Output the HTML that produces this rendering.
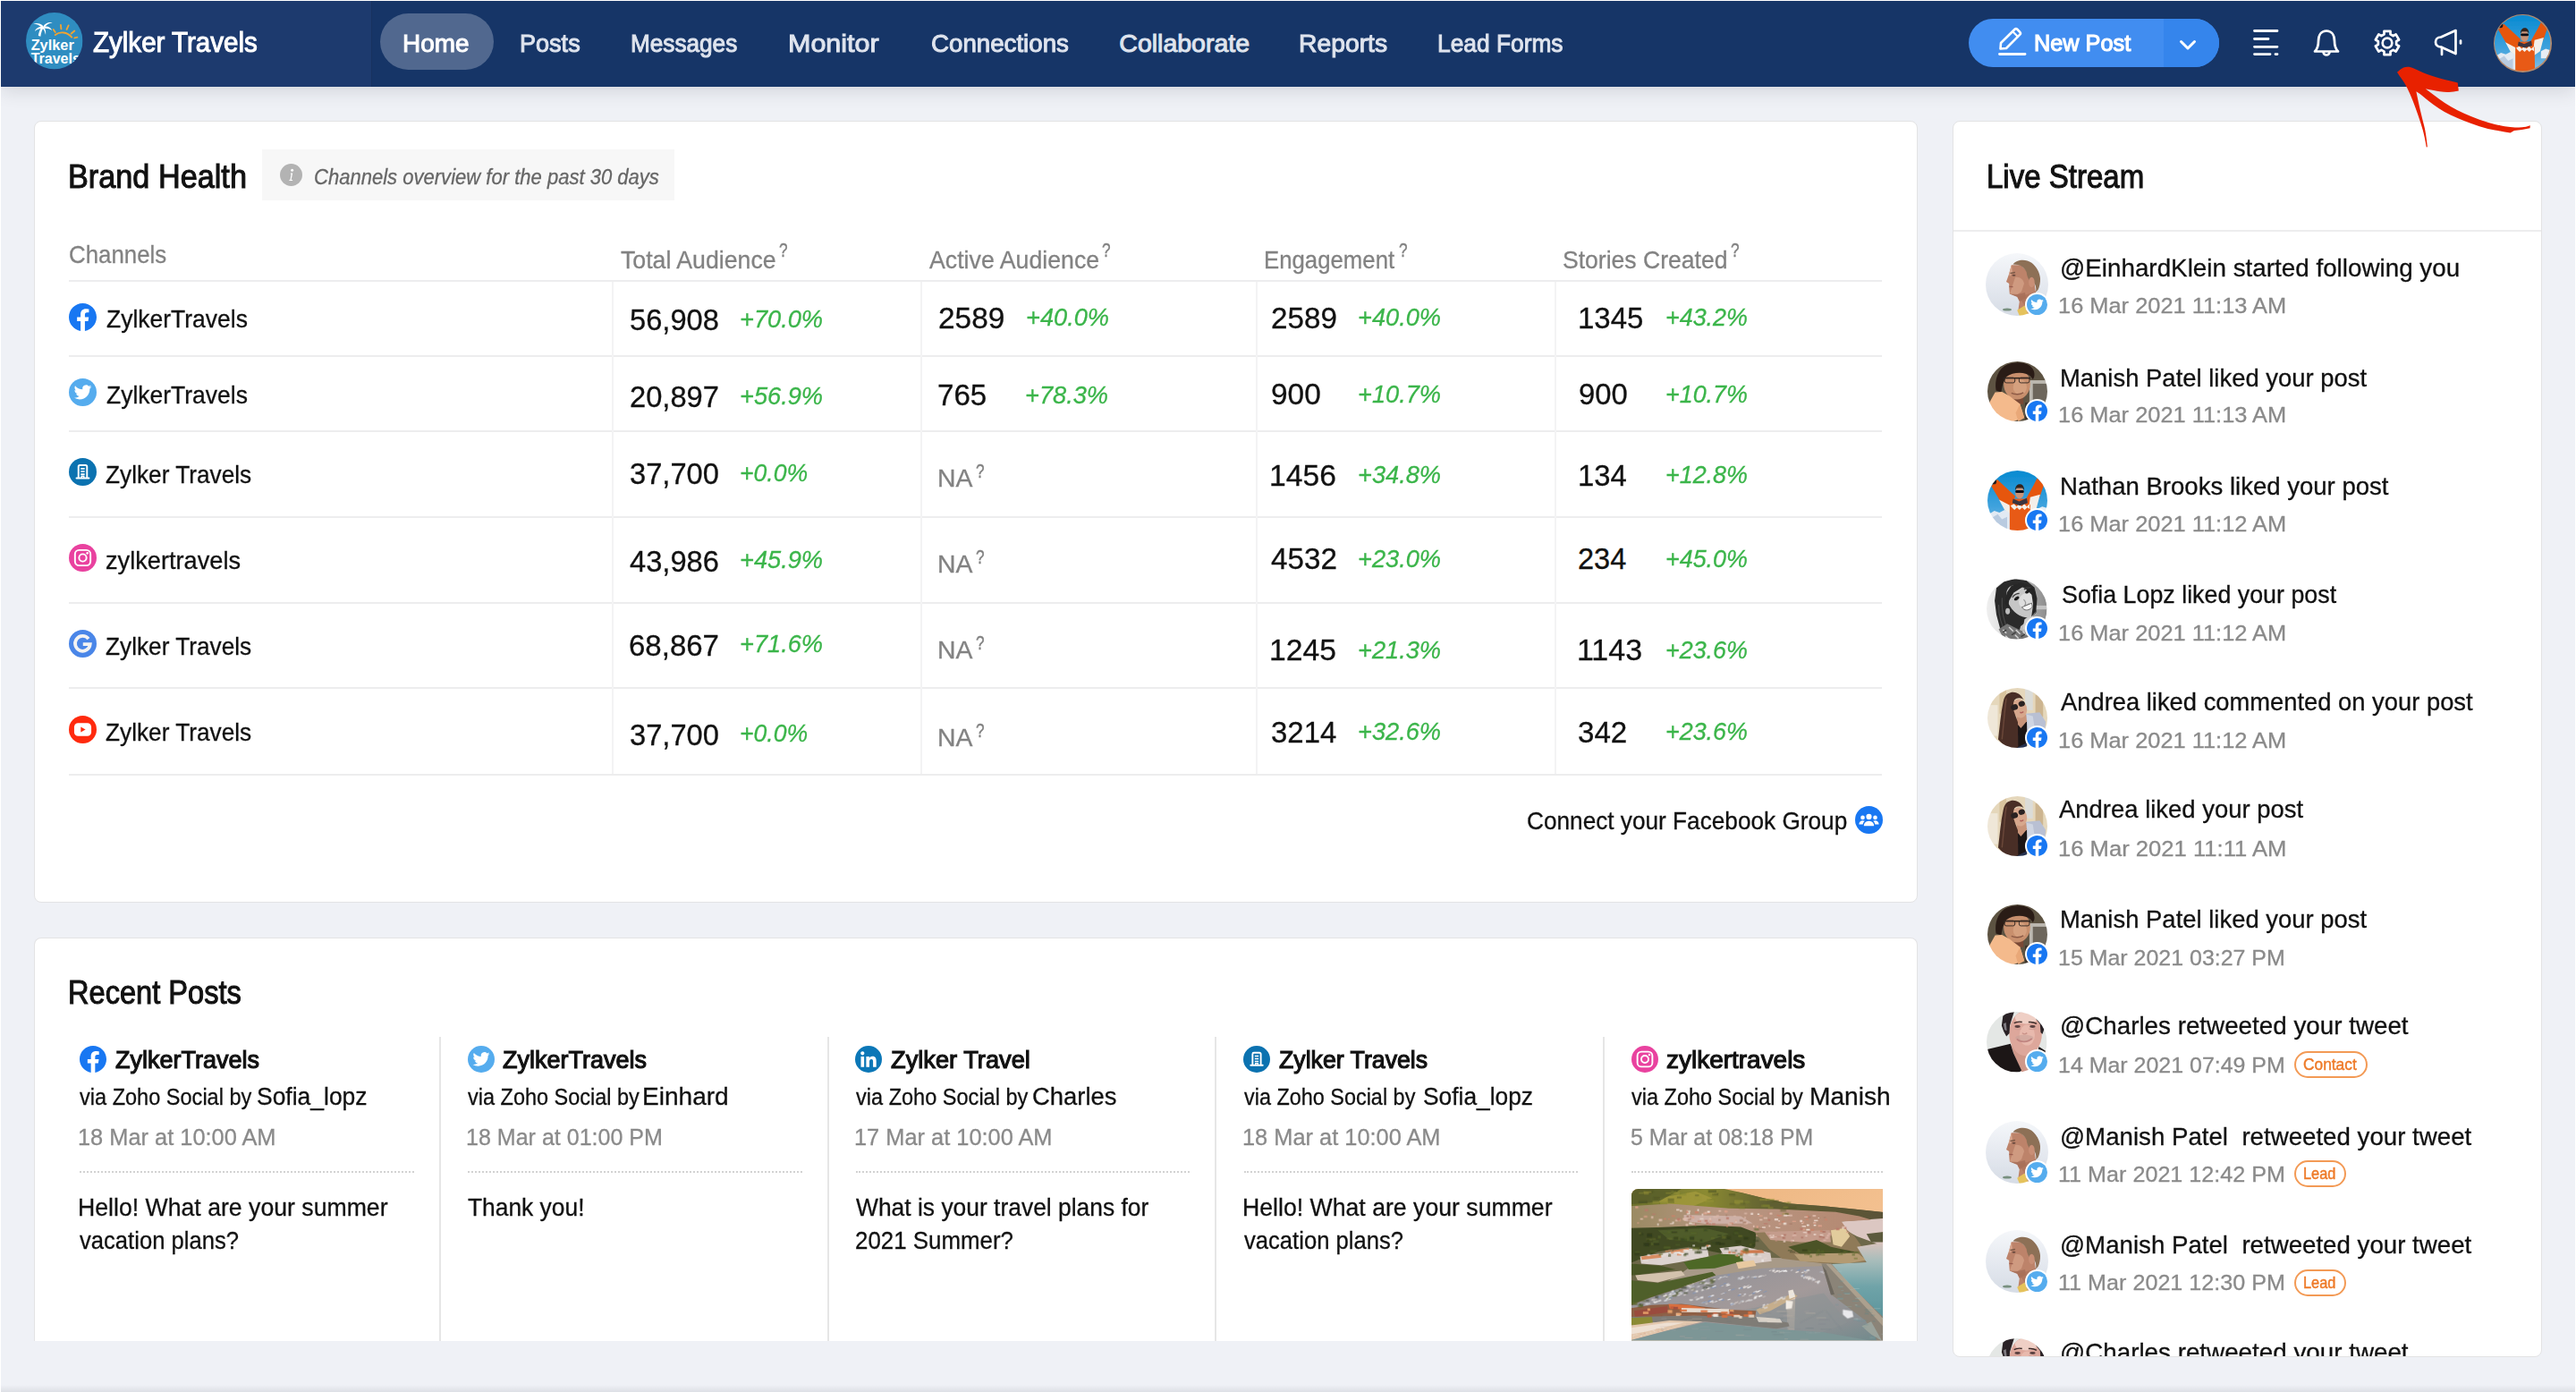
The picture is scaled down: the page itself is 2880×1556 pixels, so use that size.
<!DOCTYPE html>
<html lang="en"><head><meta charset="utf-8"><title>Zylker Travels - Zoho Social</title><style>
html,body{margin:0;padding:0}
body{width:2880px;height:1556px;overflow:hidden;background:#fff;position:relative;font-family:"Liberation Sans",sans-serif}
#app{position:absolute;left:1px;top:1px;width:2878px;height:1555px;background:#eff1f6;overflow:hidden}
#app>*, .abs, .card, header{position:absolute}
nav,article{display:block;margin:0;padding:0}
h2,h3,p,a{margin:0;font-weight:normal}
.t{position:absolute;white-space:pre;line-height:1;transform-origin:0 0;margin:0;padding:0}
.ic{position:absolute;overflow:visible}
header{left:0;top:0;width:2878px;height:96px;background:#163567;box-shadow:0 4px 20px rgba(30,35,50,.14)}
.brandbg{position:absolute;left:0;top:0;width:414px;height:96px;background:#1d3a6e;border-right:1px solid #17325f}
.pill{position:absolute;left:424.500px;top:14px;width:126.500px;height:62.500px;border-radius:32px;background:#51688f}
.np{position:absolute;left:2200px;top:20.500px;width:280px;height:54px;border-radius:27px;background:#418df0;overflow:hidden}
.np i{position:absolute;right:0;top:0;width:62px;height:54px;background:#3585ec}
.card{background:#fff;border:1px solid #e3e3e4;border-radius:8px;box-sizing:border-box}
.hl{position:absolute;height:2px;background:#ededee}
.vl{position:absolute;width:2px;background:#f3f3f4}
.dot{position:absolute;height:0;border-top:2px dotted #d2d2d2}
.tag{position:absolute;box-sizing:border-box;border:2px solid #f39a55;border-radius:15px;height:30px}
.av{position:absolute;border-radius:50%}
.bd{position:absolute;border-radius:50%;background:#fff}
</style></head><body>

<svg width="0" height="0" style="position:absolute">
<defs>
<symbol id="i-fb" viewBox="0 0 24 24"><circle cx="12" cy="12" r="11.6" fill="#fff"/><path fill="#1877f2" d="M24 12.073c0-6.627-5.373-12-12-12s-12 5.373-12 12c0 5.99 4.388 10.954 10.125 11.854v-8.385H7.078v-3.47h3.047V9.43c0-3.007 1.792-4.669 4.533-4.669 1.312 0 2.686.235 2.686.235v2.953H15.83c-1.491 0-1.956.925-1.956 1.874v2.25h3.328l-.532 3.47h-2.796v8.385C19.612 23.027 24 18.062 24 12.073z"/></symbol>
<symbol id="i-tw" viewBox="0 0 24 24"><circle cx="12" cy="12" r="12" fill="#55acee"/><path fill="#fff" transform="translate(4.4 4.3) scale(.635)" d="M23.953 4.57a10 10 0 01-2.825.775 4.958 4.958 0 002.163-2.723c-.951.555-2.005.959-3.127 1.184a4.92 4.92 0 00-8.384 4.482C7.69 8.095 4.067 6.13 1.64 3.162a4.822 4.822 0 00-.666 2.475c0 1.71.87 3.213 2.188 4.096a4.904 4.904 0 01-2.228-.616v.06a4.923 4.923 0 003.946 4.827 4.996 4.996 0 01-2.212.085 4.936 4.936 0 004.604 3.417 9.867 9.867 0 01-6.102 2.105c-.39 0-.779-.023-1.17-.067a13.995 13.995 0 007.557 2.209c9.053 0 13.998-7.496 13.998-13.985 0-.21 0-.42-.015-.63A9.935 9.935 0 0024 4.59z"/></symbol>
<symbol id="i-in" viewBox="0 0 24 24"><circle cx="12" cy="12" r="12" fill="#0b77b7"/><path fill="#fff" transform="translate(2.3 2.3) scale(.815)" d="M20.447 20.452h-3.554v-5.569c0-1.328-.027-3.037-1.852-3.037-1.853 0-2.136 1.445-2.136 2.939v5.667H9.351V9h3.414v1.561h.046c.477-.9 1.637-1.85 3.37-1.85 3.601 0 4.267 2.37 4.267 5.455v6.286zM5.337 7.433c-1.144 0-2.063-.926-2.063-2.065 0-1.138.92-2.063 2.063-2.063 1.14 0 2.064.925 2.064 2.063 0 1.139-.925 2.065-2.064 2.065zm1.782 13.019H3.555V9h3.564v11.452z"/></symbol>
<symbol id="i-co" viewBox="0 0 24 24"><circle cx="12" cy="12" r="12" fill="#0b72b0"/><g fill="none" stroke="#fff" stroke-width="1.5"><path d="M8.3 17.3V7.4a1.2 1.2 0 0 1 1.2-1.2h5a1.2 1.2 0 0 1 1.2 1.2v9.9"/><path d="M6.6 17.4h10.8" stroke-linecap="round"/><path d="M10.3 9.2h3.4M10.3 11.6h3.4M10.3 14h3.4" stroke-width="1.3"/><path d="M11 17.3v-1.6h2v1.6" stroke-width="1.1"/></g></symbol>
<symbol id="i-ig" viewBox="0 0 24 24"><circle cx="12" cy="12" r="12" fill="#e9429f"/><g fill="none" stroke="#fff" stroke-width="1.5"><rect x="5.300" y="5.300" width="13.400" height="13.400" rx="3.600"/><circle cx="12" cy="12" r="3.200"/></g><circle cx="16" cy="8" r="1" fill="#fff"/></symbol>
<symbol id="i-gg" viewBox="0 0 24 24"><circle cx="12" cy="12" r="12" fill="#4a86e8"/><path fill="none" stroke="#f3f3f3" stroke-width="2.900" d="M17 7.800A6.500 6.500 0 1 0 18.400 12.500H12.200"/></symbol>
<symbol id="i-yt" viewBox="0 0 24 24"><circle cx="12" cy="12" r="12" fill="#ff2a0e"/><rect x="4.6" y="6.3" width="14.8" height="11.4" rx="3.4" fill="#fff"/><path d="M10.3 9.6v4.8l4.1-2.4z" fill="#ff2a0e"/></symbol>
<symbol id="i-grp" viewBox="0 0 24 24"><circle cx="12" cy="12" r="12" fill="#1877f2"/><g fill="#fff"><circle cx="12" cy="9.2" r="2.4"/><path d="M7.6 17.2c0-2.6 1.9-4.3 4.4-4.3s4.4 1.7 4.4 4.3z"/><circle cx="6.6" cy="10" r="1.8"/><path d="M3.4 15.8c0-2 1.3-3.3 3.2-3.3.7 0 1.3.2 1.8.5-1 .8-1.6 2-1.7 2.8z"/><circle cx="17.4" cy="10" r="1.8"/><path d="M20.6 15.8c0-2-1.3-3.3-3.2-3.3-.7 0-1.3.2-1.8.5 1 .8 1.6 2 1.7 2.8z"/></g></symbol>

<clipPath id="cc"><circle cx="35" cy="35" r="35"/></clipPath>
<filter id="ab" x="-10%" y="-10%" width="120%" height="120%"><feGaussianBlur stdDeviation=".55"/></filter>
<linearGradient id="g-ein" x1="0" y1="0" x2="0" y2="1"><stop offset="0" stop-color="#f5f7fa"/><stop offset=".55" stop-color="#e4e8ef"/><stop offset="1" stop-color="#d6dce5"/></linearGradient>
<symbol id="a-ein" viewBox="0 0 70 70"><g clip-path="url(#cc)"><g filter="url(#ab)">
<rect width="70" height="70" fill="url(#g-ein)"/>
<ellipse cx="24" cy="63" rx="5" ry="1.6" fill="#78907f"/>
<path d="M28.800 13.300 26.200 23 23 32 26.200 34 26.200 38.500 26.800 45.600 35.200 48.800 37.800 54 36.500 63 39 70H55L56 43.600 54.600 34 47 21 39 13.300z" fill="#bd836a"/>
<path d="M28.800 13.300 30 22 27 26 26.200 23z" fill="#d8a58c"/>
<path d="M33 27c5-1 9 2 10 7l-3 9-6 4-7-1.500z" fill="#cf9a80"/>
<path d="M30.500 12.500C34 7.500 44 5.500 51.400 10.700 57 15 60.500 22 61 28c.3 5-1 10-2.500 13L56 43.500C57 39 55.500 35 54 33l-4-1c-2.500-3-4-7-4.400-11-2-4-5-7-9.600-8z" fill="#8d6f57"/>
<ellipse cx="51.400" cy="32.500" rx="3.300" ry="5.800" fill="#c98f76"/>
<path d="M35.200 63.700 43.600 58.500 48 70H37.800z" fill="#e5c25b"/>
<path d="M27.500 22.500l5.500-1" stroke="#7d5a48" stroke-width="1.300"/><ellipse cx="31.500" cy="24.800" rx="2" ry="1" fill="#6b4a3d"/><path d="M26.500 37.400l4 .3" stroke="#9a5d50" stroke-width="1.200"/><path d="M27 45.500 35.500 49 38 54 45 50 44 44 36 46z" fill="#a36b55" opacity=".7"/>
<path d="M36.500 49 45 60 56 52 56 43z" fill="#a96f58" opacity=".6"/>
</g></g></symbol>

<symbol id="a-man" viewBox="0 0 70 70"><g clip-path="url(#cc)"><g filter="url(#ab)">
<rect width="70" height="70" fill="#5d5242"/>
<rect x="49" y="22" width="21" height="30" fill="#bcb8b0"/>
<rect x="53" y="26" width="17" height="22" fill="#6d665c"/>
<rect x="44" y="48" width="26" height="22" fill="#3c3229"/>
<path d="M25 38h17v12H25z" fill="#7a4a35"/>
<ellipse cx="34.500" cy="26.500" rx="15.500" ry="18" fill="#c88f6d"/>
<ellipse cx="38" cy="30" rx="8" ry="9" fill="#d5a07e"/>
<path d="M10 34C8 22 12 8 24 3.500 34-.5 48 1 53 9c3 5 2 10 0 12l-3-4C44 12 30 12 22 18l-4 8-2 10z" fill="#2a1c17"/>
<path d="M17 19.500h33" stroke="#2b211d" stroke-width="1.600"/>
<rect x="20" y="19" width="12" height="6" rx="2" fill="none" stroke="#3a2c26" stroke-width="1"/>
<rect x="37" y="19" width="12" height="6" rx="2" fill="none" stroke="#3a2c26" stroke-width="1"/>
<path d="M28 37c4 2 10 2 14-.5" stroke="#8d5a45" stroke-width="1.500" fill="none"/>
<path d="M0 52 9 36l8-.5 9 5 12 9 5 16-14 5H0z" fill="#f4ba8c"/>
<path d="M38 50 43 66 36 70 33 60z" fill="#e9a878"/>
</g></g></symbol>

<linearGradient id="g-sky" x1="0" y1="0" x2="0" y2="1"><stop offset="0" stop-color="#078ad1"/><stop offset=".6" stop-color="#3fa2dd"/><stop offset="1" stop-color="#86c0e6"/></linearGradient>
<symbol id="a-nat" viewBox="0 0 70 70"><g clip-path="url(#cc)"><g filter="url(#ab)">
<rect width="70" height="70" fill="url(#g-sky)"/>
<path d="M0 52 8 47l6 2 6-3 8 3V70H0z" fill="#e2eaf3"/>
<path d="M4 56l8-5 5 6 6-3v16H2z" fill="#b9cbe0"/>
<path d="M58 45l6-3 6 2v10H58z" fill="#e8eef5"/>
<path d="M4.500 18 11.500 10.500 32.500 30 27.500 43 14.500 35z" fill="#e6560f"/>
<path d="M58 9 66 16.500 61 31 49 45 45 33 54.500 16z" fill="#e6560f"/>
<path d="M13.500 34 27 41 30 52 20 46z" fill="#f3efe9"/>
<path d="M50 31 61.500 28 57 45 47 52z" fill="#f3efe9"/>
<path d="M26 41 30 33h17l3 8 .5 29H26z" fill="#e85a12"/>
<path d="M27 41l4-2 3 3 3-3 3 3 3-3 3 3 3-3 .5 6-3-2-3 3-3-3-3 3-3-3-3 3-3-3z" fill="#f5f1ec"/>
<path d="M30 33 37 36 46 32 47 38 38 41 29 38z" fill="#3b3440"/>
<ellipse cx="37.500" cy="26" rx="5" ry="7" fill="#c99377"/>
<path d="M32.300 23c0-5 3-7 5.500-7s5.200 2 5.200 7l-2-2.500h-7z" fill="#33231b"/>
<rect x="32.600" y="23" width="10" height="3" rx="1.300" fill="#0f0f12"/>
<circle cx="7.500" cy="13" r="3" fill="#1d1b20"/>
</g></g></symbol>

<linearGradient id="g-sof" x1="0" y1="0" x2="1" y2="0"><stop offset="0" stop-color="#efefef"/><stop offset=".35" stop-color="#dcdcdc"/><stop offset=".8" stop-color="#a2a2a2"/><stop offset="1" stop-color="#8c8c8c"/></linearGradient>
<symbol id="a-sof" viewBox="0 0 70 70"><g clip-path="url(#cc)"><g filter="url(#ab)">
<rect width="70" height="70" fill="url(#g-sof)"/>
<rect x="56" y="31" width="14" height="4.500" fill="#c4c4c4"/>
<path d="M11.400 10.700 20.100 3.400 32.200 .3 46.200 2 55.600 10 58.600 22.800 57.600 38.900 51.600 45.600 39.500 55 35.500 70H24L16.800 61.700 11.400 41.600 9.400 25.500z" fill="#2b2b2b"/>
<path d="M14 30c0 12 3 24 9 34M18 22c-1 14 2 28 8 40" stroke="#4a4a4a" stroke-width="1.100" fill="none"/>
<path d="M44 47 53 41 57 52 50 62 42 58z" fill="#cfcfcf"/>
<ellipse cx="40.200" cy="26.100" rx="21.500" ry="14" transform="rotate(51 40.200 26.100)" fill="#c6c6c6"/>
<ellipse cx="46.200" cy="25.500" rx="8.500" ry="9.500" transform="rotate(40 46.200 25.500)" fill="#dedede"/>
<ellipse cx="34" cy="12.500" rx="7" ry="4" transform="rotate(-30 34 12.500)" fill="#d4d4d4"/>
<path d="M23.500 16.100 28.800 8 39.500 4.700 48.900 7.400 40.900 10 31.500 16.100 26.100 25.500 24.800 34.900 21 28z" fill="#262626"/>
<path d="M49 7.400 56 14 58 26 57 38 52 44 54 30 52 16z" fill="#262626"/>
<ellipse cx="34.900" cy="22.800" rx="3.300" ry="1.800" transform="rotate(-32 34.900 22.800)" fill="#1f1f1f"/>
<ellipse cx="47.600" cy="14.700" rx="3.300" ry="1.800" transform="rotate(-32 47.600 14.700)" fill="#1f1f1f"/>
<path d="M30 21.500c2-3 5-4.500 8-4.500M43.500 12.500c2.500-2.300 5.500-3 8-2.200" stroke="#3a3a3a" stroke-width="1.300" fill="none"/>
<path d="M43 24c2 2 3 4.500 1.500 6.500 2 .5 4-.5 5-2" stroke="#9a9a9a" stroke-width="1.300" fill="none"/>
<path d="M40.800 33 52.300 28.200 53.200 32.200C51 35.800 46.500 37.200 43.500 35.500z" fill="#f6f6f6" stroke="#5a5a5a" stroke-width=".9"/>
<ellipse cx="24.500" cy="37.500" rx="2.600" ry="3.600" fill="#bdbdbd"/>
<path d="M14.100 58.300 24 52 36 58 48.900 64 50 70H20z" fill="#757575"/>
<path d="M19 59l4 4m3-7 5 5m3-2 5 5m3-3 4 4M22 66l3 3m8-4 4 4" stroke="#d6d6d6" stroke-width="1.500"/>
<path d="M19 62l4-3m6 6 5-3m6 5 5-3" stroke="#3a3a3a" stroke-width="1.300"/>
</g></g></symbol>

<symbol id="a-and" viewBox="0 0 70 70"><g clip-path="url(#cc)"><g filter="url(#ab)">
<rect width="70" height="70" fill="#e5d7bb"/>
<rect x="0" y="20" width="12" height="36" fill="#f1ebe0" opacity=".8"/>
<rect x="14" y="0" width="8" height="30" fill="#d3bb90" opacity=".7"/>
<rect x="44" y="0" width="9" height="26" fill="#d8dde0" opacity=".8"/>
<rect x="56" y="8" width="9" height="26" fill="#c7ad86" opacity=".8"/>
<path d="M45 30l16-1.500 7 11-1 12-21 3z" fill="#b9c0d3"/>
<path d="M46 31l7 2 3 20-10 2z" fill="#cfd5e2"/>
<path d="M34 41 46 38l.6 28L34 70z" fill="#1b1518"/>
<path d="M34 33l11-2 1 8-7 8-5-6z" fill="#c99479"/>
<ellipse cx="37.500" cy="24" rx="8.500" ry="11" transform="rotate(-15 37.500 24)" fill="#d7a78c"/>
<path d="M24 6.500C30 3 38 5 42.500 14c-3-3-8-3-11 0-2 4-2 10 0 15l4 11 .5 30H22L12.500 60c2-16 3-30 6-44 1-5 3-8 5.500-9.500z" fill="#4a2f25"/>
<path d="M22 12c-2 14-3 30-5 48" stroke="#6a473a" stroke-width="1.500" fill="none"/>
<ellipse cx="31.500" cy="22.500" rx="4.200" ry="3.400" transform="rotate(-20 31.500 22.500)" fill="#2a2320"/>
<ellipse cx="40" cy="18.500" rx="3.800" ry="3.200" transform="rotate(-20 40 18.500)" fill="#2a2320"/>
<path d="M38 28.500c1.500.8 3 .2 4-.8" stroke="#b0605a" stroke-width="1.600" fill="none"/>
<path d="M46 64l-12 6h12z" fill="#28324f"/>
</g></g></symbol>

<symbol id="a-cha" viewBox="0 0 70 70"><g clip-path="url(#cc)"><g filter="url(#ab)">
<rect width="70" height="70" fill="#e4e7e5"/>
<path d="M60.700 40.500 68 45.200 70 46V50L60 43.200z" fill="#1d1719"/>
<path d="M28.500 38.500 55.300 47.900 48.600 70H40.500L31.200 47.900z" fill="#cf988a"/>
<ellipse cx="45.200" cy="25.100" rx="19" ry="26" fill="#dda79b"/>
<ellipse cx="46" cy="7" rx="13" ry="7" fill="#efcfc5"/>
<ellipse cx="47" cy="27" rx="9" ry="12" fill="#e8b9ad"/>
<path d="M17.500 16 19 5 24.500 .5 32 0 29.500 7.700 27 15.800 26.500 25 23 28.500 19.800 22.500z" fill="#2a2426"/>
<path d="M19.500 14 22.500 12.500 23.500 22 21 21z" fill="#807b82"/>
<path d="M58 5 64 13 67 19.800 64.700 25.800 62.700 23.800 62 14.400 57.300 8.400z" fill="#2a2426"/>
<path d="M31.800 13.200C35 11.400 38 11.200 41.200 11.900M48.600 12C52 11.600 55.500 12.300 58 13.900" stroke="#3a2a28" stroke-width="1.500" fill="none"/>
<ellipse cx="35.900" cy="17.100" rx="3.200" ry="1.500" fill="#5a4140"/>
<ellipse cx="53.300" cy="17.100" rx="3.200" ry="1.500" fill="#5a4140"/>
<path d="M31.500 19.500c3 1.300 6 1.300 8.500.2M49 19.700c3 1.100 6 1.100 8.500-.2" stroke="#d29f97" stroke-width="1.200" fill="none"/>
<path d="M41.500 24.500c1.500 1.800 3.500 1.800 5.500 0" stroke="#c99288" stroke-width="1.400" fill="none"/>
<ellipse cx="43.900" cy="30.300" rx="10.500" ry="3.600" fill="#c3a098" opacity=".55"/>
<path d="M35.200 31.500C39 35.600 48 35.800 52.600 31" stroke="#c08480" stroke-width="1.900" fill="none"/>
<path d="M0 44 1.700 43.200 27.800 37.200 31.200 47.900 40.500 68 38 70H0z" fill="#1d1719"/>
</g></g></symbol>
</defs></svg>

<div id="app">
<div id="w" style="left:-1px;top:-1px;width:2880px;height:1556px">
<header style="left:1px;top:1px">
<div class="brandbg"></div>
</header>
<svg class="ic" style="left:28.500px;top:14.300px;width:63.500px;height:63.500px" viewBox="0 0 62 62">
<defs><clipPath id="lc"><circle cx="31" cy="31" r="31"/></clipPath></defs>
<g clip-path="url(#lc)"><rect width="62" height="62" fill="#2f8dc1"/>
<g fill="none" stroke="#f2a330" stroke-width="1.800" stroke-linecap="round"><path d="M32 24.500c5-4 13-3.500 18 2.500"/><path d="M30 18.500l2 3M38 13.500l.5 4.500M46.500 14l-2 4.500M53 20l-3.500 3M56 27l-3 .8"/></g>
<g fill="#fff"><path d="M13.500 25.500c1-6 3-9 5-10.500l1.500.5c-2 2.500-3.500 6-4 10.500z"/><path d="M19 15c-3-3-7-4-11-2.500 4 0 7 1.500 9.500 4z"/><path d="M19 15c2-3.500 6-5 10-4-4 .5-6.500 2.500-8.500 5z"/><path d="M19.500 15.500c4-1 7.500.5 9 4-3-2-5.500-2.500-8.500-2z"/><path d="M18.500 15.500c-4-.5-7.500 1.500-9 5 3-2.500 5.500-3 8.500-3z"/><path d="M19.500 16c2 2 2.500 5 2 8.500-.8-3.500-1.500-5.500-3.500-7.500z"/></g>
<text x="5.500" y="41" font-family="Liberation Sans, sans-serif" font-weight="bold" font-size="17" fill="#fff" textLength="47" lengthAdjust="spacingAndGlyphs">Zylker</text>
<text x="5.500" y="56" font-family="Liberation Sans, sans-serif" font-weight="bold" font-size="17" fill="#fff" textLength="54" lengthAdjust="spacingAndGlyphs">Travels</text>
</g></svg>
<div class="t" style="left:104.0px;top:32.0px;font-size:30.5px;color:#fff;-webkit-text-stroke:1px #fff;transform:scaleX(0.9683);">Zylker Travels</div>
<div class="pill" style="left:425px;top:14.500px;width:127px;height:63px"></div>
<nav>
<a class="t" style="left:449.5px;top:33.5px;font-size:28.5px;color:#fff;-webkit-text-stroke:1px #fff;transform:scaleX(0.9797);">Home</a>
<a class="t" style="left:581.1px;top:33.5px;font-size:28.5px;color:#dfe4ee;-webkit-text-stroke:1px #dfe4ee;transform:scaleX(0.9493);">Posts</a>
<a class="t" style="left:705.2px;top:33.5px;font-size:28.5px;color:#dfe4ee;-webkit-text-stroke:1px #dfe4ee;transform:scaleX(0.9180);">Messages</a>
<a class="t" style="left:881.4px;top:33.5px;font-size:28.5px;color:#dfe4ee;-webkit-text-stroke:1px #dfe4ee;transform:scaleX(1.0699);">Monitor</a>
<a class="t" style="left:1040.5px;top:33.5px;font-size:28.5px;color:#dfe4ee;-webkit-text-stroke:1px #dfe4ee;transform:scaleX(0.9713);">Connections</a>
<a class="t" style="left:1251.3px;top:33.5px;font-size:28.5px;color:#dfe4ee;-webkit-text-stroke:1px #dfe4ee;">Collaborate</a>
<a class="t" style="left:1452.2px;top:33.5px;font-size:28.5px;color:#dfe4ee;-webkit-text-stroke:1px #dfe4ee;transform:scaleX(0.9928);">Reports</a>
<a class="t" style="left:1606.9px;top:33.5px;font-size:28.5px;color:#dfe4ee;-webkit-text-stroke:1px #dfe4ee;transform:scaleX(0.9240);">Lead Forms</a>
</nav>
<div class="np" style="left:2201px;top:21.300px;width:280px;height:53.700px"><i></i></div>
<svg class="ic" style="left:2232px;top:29px;width:36px;height:36px" viewBox="0 0 36 36" fill="none" stroke="#fff" stroke-width="2.600" stroke-linejoin="round" stroke-linecap="round">
<path d="M4.500 25.500 5 19 20.500 3.800a2 2 0 0 1 2.800 0l3 3a2 2 0 0 1 0 2.800L11 25z"/><path d="M18.500 6.500l5.500 5.500" stroke-width="2.200"/><path d="M3.500 31.500h28.500" stroke-width="2.800"/></svg>
<div class="t" style="left:2273.5px;top:36.3px;font-size:25.5px;color:#fff;-webkit-text-stroke:1.15px #fff;transform:scaleX(0.9917);">New Post</div>
<svg class="ic" style="left:2434px;top:42px;width:24px;height:16px" viewBox="0 0 24 16" fill="none" stroke="#fff" stroke-width="3" stroke-linecap="round" stroke-linejoin="round"><path d="M4.500 4.500 12 12 19.500 4.500"/></svg>
<svg class="ic" style="left:2516px;top:30px;width:34px;height:34px" viewBox="0 0 34 34" fill="none" stroke="#fff" stroke-width="2.800" stroke-linecap="round"><path d="M4.500 4.500h25.500M4.500 13.500h15.500M4.500 22.300h25.500M4.500 30.600h17.500M28 30.600h2"/></svg>
<svg class="ic" style="left:2583px;top:30px;width:36px;height:36px" viewBox="0 0 36 36" fill="none" stroke="#fff" stroke-width="2.700" stroke-linejoin="round" stroke-linecap="round"><path d="M5 27.500c3-3 4-6 4-11.500C9 9 12.500 4.500 18 4.500S27 9 27 16c0 5.500 1 8.500 4 11.500z"/><path d="M14.500 28.500c.5 2 2 3 3.500 3s3-1 3.500-3"/></svg>
<svg class="ic" style="left:2650px;top:29px;width:38px;height:38px" viewBox="0 0 38 38" fill="none" stroke="#fff" stroke-width="2.700" stroke-linejoin="round"><path d="M15.48 5.86 L22.52 5.86 L22.49 9.31 L25.65 11.13 L28.62 9.38 L32.14 15.48 L29.14 17.18 L29.14 20.82 L32.14 22.52 L28.62 28.62 L25.65 26.87 L22.49 28.69 L22.52 32.14 L15.48 32.14 L15.51 28.69 L12.35 26.87 L9.38 28.62 L5.86 22.52 L8.86 20.82 L8.86 17.18 L5.86 15.48 L9.38 9.38 L12.35 11.13 L15.51 9.31Z"/><circle cx="19" cy="19" r="5.300"/></svg>
<svg class="ic" style="left:2718px;top:29px;width:38px;height:38px" viewBox="0 0 38 38" fill="none" stroke="#fff" stroke-width="2.700" stroke-linejoin="round" stroke-linecap="round"><path d="M27.500 5 11 12.500C7 12.500 5 15 5 18s2 5.500 6 5.500L27.500 31z"/><path d="M12 24v8" /><path d="M33 16.500v3"/></svg>
<div class="abs" style="left:2788px;top:16px;width:64.500px;height:64.500px;border-radius:50%;background:#b58a6c"></div>
<svg class="ic" style="left:2789px;top:17px;width:62.500px;height:62.500px"><use href="#a-nat"/></svg>
<section class="card" style="left:38px;top:135px;width:2106px;height:874px"></section>
<h2 class="t" style="left:76.1px;top:180.3px;font-size:36px;color:#111;-webkit-text-stroke:1.05px #111;transform:scaleX(0.9515);">Brand Health</h2>
<div class="abs" style="left:293px;top:167px;width:461px;height:57px;background:#f7f7f7"></div>
<svg class="ic" style="left:312.500px;top:182.500px;width:25px;height:25px" viewBox="0 0 25 25"><circle cx="12.500" cy="12.500" r="12.500" fill="#b3b3b3"/><path d="M12 10.500h2.200l-1.600 7.500h1.600l-.2 1h-3.700l.2-1h.9l1.200-6.500h-.9z" fill="#fff"/><circle cx="13.600" cy="7.200" r="1.500" fill="#fff"/></svg>
<div class="t" style="left:350.6px;top:187.0px;font-size:23.5px;color:#666;font-style:italic;-webkit-text-stroke:0.3px #666;transform:scaleX(0.9378);">Channels overview for the past 30 days</div>
<div class="t" style="left:77.1px;top:271.0px;font-size:28px;color:#828282;-webkit-text-stroke:0.3px #828282;transform:scaleX(0.9231);">Channels</div>
<div class="t" style="left:694.0px;top:276.5px;font-size:28px;color:#828282;-webkit-text-stroke:0.3px #828282;transform:scaleX(0.9530);">Total Audience</div>
<div class="t" style="left:871.2px;top:270.0px;font-size:21.5px;color:#828282;-webkit-text-stroke:0.4px #828282;transform:scaleX(0.8000);">?</div>
<div class="t" style="left:1039.0px;top:276.5px;font-size:28px;color:#828282;-webkit-text-stroke:0.3px #828282;transform:scaleX(0.9545);">Active Audience</div>
<div class="t" style="left:1232.2px;top:270.0px;font-size:21.5px;color:#828282;-webkit-text-stroke:0.4px #828282;transform:scaleX(0.8000);">?</div>
<div class="t" style="left:1412.7px;top:276.5px;font-size:28px;color:#828282;-webkit-text-stroke:0.3px #828282;transform:scaleX(0.9204);">Engagement</div>
<div class="t" style="left:1564.2px;top:270.0px;font-size:21.5px;color:#828282;-webkit-text-stroke:0.4px #828282;transform:scaleX(0.8000);">?</div>
<div class="t" style="left:1747.1px;top:276.5px;font-size:28px;color:#828282;-webkit-text-stroke:0.3px #828282;transform:scaleX(0.9479);">Stories Created</div>
<div class="t" style="left:1935.2px;top:270.0px;font-size:21.5px;color:#828282;-webkit-text-stroke:0.4px #828282;transform:scaleX(0.8000);">?</div>
<div class="hl" style="left:77px;top:313.0px;width:2027px"></div>
<div class="hl" style="left:77px;top:397.0px;width:2027px"></div>
<div class="hl" style="left:77px;top:481.0px;width:2027px"></div>
<div class="hl" style="left:77px;top:577.0px;width:2027px"></div>
<div class="hl" style="left:77px;top:673.0px;width:2027px"></div>
<div class="hl" style="left:77px;top:768.0px;width:2027px"></div>
<div class="hl" style="left:77px;top:865.0px;width:2027px"></div>
<div class="vl" style="left:684.0px;top:315px;width:2px;height:550px"></div>
<div class="vl" style="left:1029.0px;top:315px;width:2px;height:550px"></div>
<div class="vl" style="left:1404.0px;top:315px;width:2px;height:550px"></div>
<div class="vl" style="left:1738.0px;top:315px;width:2px;height:550px"></div>
<svg class="ic" style="left:76.9px;top:338.5px;width:31.0px;height:31.0px"><use href="#i-fb"/></svg>
<div class="t" style="left:118.6px;top:343.0px;font-size:28px;color:#111;-webkit-text-stroke:0.3px #111;transform:scaleX(0.9455);">ZylkerTravels</div>
<div class="t" style="left:704.0px;top:341.5px;font-size:32.5px;color:#111;-webkit-text-stroke:0.3px #111;transform:scaleX(1.0052);">56,908</div>
<div class="t" style="left:827.0px;top:342.5px;font-size:27.5px;color:#3bb54a;font-style:italic;-webkit-text-stroke:0.3px #3bb54a;transform:scaleX(0.9890);">+70.0%</div>
<div class="t" style="left:1049.0px;top:340.0px;font-size:32.5px;color:#111;-webkit-text-stroke:0.3px #111;transform:scaleX(1.0286);">2589</div>
<div class="t" style="left:1147.0px;top:340.5px;font-size:27.5px;color:#3bb54a;font-style:italic;-webkit-text-stroke:0.3px #3bb54a;transform:scaleX(0.9890);">+40.0%</div>
<div class="t" style="left:1420.5px;top:340.0px;font-size:32.5px;color:#111;-webkit-text-stroke:0.3px #111;transform:scaleX(1.0214);">2589</div>
<div class="t" style="left:1518.0px;top:340.5px;font-size:27.5px;color:#3bb54a;font-style:italic;-webkit-text-stroke:0.3px #3bb54a;transform:scaleX(0.9890);">+40.0%</div>
<div class="t" style="left:1763.5px;top:340.0px;font-size:32.5px;color:#111;-webkit-text-stroke:0.3px #111;transform:scaleX(1.0145);">1345</div>
<div class="t" style="left:1861.5px;top:340.5px;font-size:27.5px;color:#3bb54a;font-style:italic;-webkit-text-stroke:0.3px #3bb54a;transform:scaleX(0.9780);">+43.2%</div>
<svg class="ic" style="left:76.9px;top:422.5px;width:31.0px;height:31.0px"><use href="#i-tw"/></svg>
<div class="t" style="left:118.6px;top:427.5px;font-size:28px;color:#111;-webkit-text-stroke:0.3px #111;transform:scaleX(0.9455);">ZylkerTravels</div>
<div class="t" style="left:704.0px;top:428.0px;font-size:32.5px;color:#111;-webkit-text-stroke:0.3px #111;transform:scaleX(1.0052);">20,897</div>
<div class="t" style="left:827.0px;top:428.5px;font-size:27.5px;color:#3bb54a;font-style:italic;-webkit-text-stroke:0.3px #3bb54a;transform:scaleX(0.9890);">+56.9%</div>
<div class="t" style="left:1048.0px;top:426.0px;font-size:32.5px;color:#111;-webkit-text-stroke:0.3px #111;transform:scaleX(1.0192);">765</div>
<div class="t" style="left:1146.0px;top:427.5px;font-size:27.5px;color:#3bb54a;font-style:italic;-webkit-text-stroke:0.3px #3bb54a;transform:scaleX(0.9890);">+78.3%</div>
<div class="t" style="left:1420.5px;top:425.0px;font-size:32.5px;color:#111;-webkit-text-stroke:0.3px #111;transform:scaleX(1.0288);">900</div>
<div class="t" style="left:1518.0px;top:426.5px;font-size:27.5px;color:#3bb54a;font-style:italic;-webkit-text-stroke:0.3px #3bb54a;transform:scaleX(0.9890);">+10.7%</div>
<div class="t" style="left:1764.5px;top:425.0px;font-size:32.5px;color:#111;-webkit-text-stroke:0.3px #111;transform:scaleX(1.0096);">900</div>
<div class="t" style="left:1861.5px;top:426.5px;font-size:27.5px;color:#3bb54a;font-style:italic;-webkit-text-stroke:0.3px #3bb54a;transform:scaleX(0.9780);">+10.7%</div>
<svg class="ic" style="left:76.9px;top:511.5px;width:31.0px;height:31.0px"><use href="#i-co"/></svg>
<div class="t" style="left:118.1px;top:516.5px;font-size:28px;color:#111;-webkit-text-stroke:0.3px #111;transform:scaleX(0.9364);">Zylker Travels</div>
<div class="t" style="left:704.0px;top:513.5px;font-size:32.5px;color:#111;-webkit-text-stroke:0.3px #111;transform:scaleX(1.0052);">37,700</div>
<div class="t" style="left:827.1px;top:514.5px;font-size:27.5px;color:#3bb54a;font-style:italic;-webkit-text-stroke:0.3px #3bb54a;transform:scaleX(0.9671);">+0.0%</div>
<div class="t" style="left:1048.0px;top:521.0px;font-size:28px;color:#828282;-webkit-text-stroke:0.3px #828282;transform:scaleX(1.0135);">NA</div>
<div class="t" style="left:1091.2px;top:517.0px;font-size:21.5px;color:#828282;-webkit-text-stroke:0.4px #828282;transform:scaleX(0.8000);">?</div>
<div class="t" style="left:1419.4px;top:515.5px;font-size:32.5px;color:#111;-webkit-text-stroke:0.3px #111;transform:scaleX(1.0362);">1456</div>
<div class="t" style="left:1518.0px;top:517.0px;font-size:27.5px;color:#3bb54a;font-style:italic;-webkit-text-stroke:0.3px #3bb54a;transform:scaleX(0.9890);">+34.8%</div>
<div class="t" style="left:1763.5px;top:515.5px;font-size:32.5px;color:#111;-webkit-text-stroke:0.3px #111;transform:scaleX(1.0096);">134</div>
<div class="t" style="left:1861.5px;top:517.0px;font-size:27.5px;color:#3bb54a;font-style:italic;-webkit-text-stroke:0.3px #3bb54a;transform:scaleX(0.9780);">+12.8%</div>
<svg class="ic" style="left:76.9px;top:607.5px;width:31.0px;height:31.0px"><use href="#i-ig"/></svg>
<div class="t" style="left:118.0px;top:612.5px;font-size:28px;color:#111;-webkit-text-stroke:0.3px #111;transform:scaleX(0.9708);">zylkertravels</div>
<div class="t" style="left:704.0px;top:611.5px;font-size:32.5px;color:#111;-webkit-text-stroke:0.3px #111;transform:scaleX(1.0052);">43,986</div>
<div class="t" style="left:827.0px;top:612.0px;font-size:27.5px;color:#3bb54a;font-style:italic;-webkit-text-stroke:0.3px #3bb54a;transform:scaleX(0.9890);">+45.9%</div>
<div class="t" style="left:1048.0px;top:617.0px;font-size:28px;color:#828282;-webkit-text-stroke:0.3px #828282;transform:scaleX(1.0135);">NA</div>
<div class="t" style="left:1091.2px;top:613.0px;font-size:21.5px;color:#828282;-webkit-text-stroke:0.4px #828282;transform:scaleX(0.8000);">?</div>
<div class="t" style="left:1420.5px;top:609.0px;font-size:32.5px;color:#111;-webkit-text-stroke:0.3px #111;transform:scaleX(1.0214);">4532</div>
<div class="t" style="left:1518.0px;top:610.5px;font-size:27.5px;color:#3bb54a;font-style:italic;-webkit-text-stroke:0.3px #3bb54a;transform:scaleX(0.9890);">+23.0%</div>
<div class="t" style="left:1764.0px;top:609.0px;font-size:32.5px;color:#111;-webkit-text-stroke:0.3px #111;">234</div>
<div class="t" style="left:1861.5px;top:610.5px;font-size:27.5px;color:#3bb54a;font-style:italic;-webkit-text-stroke:0.3px #3bb54a;transform:scaleX(0.9780);">+45.0%</div>
<svg class="ic" style="left:76.9px;top:703.5px;width:31.0px;height:31.0px"><use href="#i-gg"/></svg>
<div class="t" style="left:118.1px;top:708.5px;font-size:28px;color:#111;-webkit-text-stroke:0.3px #111;transform:scaleX(0.9364);">Zylker Travels</div>
<div class="t" style="left:703.0px;top:705.5px;font-size:32.5px;color:#111;-webkit-text-stroke:0.3px #111;transform:scaleX(1.0156);">68,867</div>
<div class="t" style="left:827.0px;top:705.5px;font-size:27.5px;color:#3bb54a;font-style:italic;-webkit-text-stroke:0.3px #3bb54a;transform:scaleX(0.9890);">+71.6%</div>
<div class="t" style="left:1048.0px;top:713.0px;font-size:28px;color:#828282;-webkit-text-stroke:0.3px #828282;transform:scaleX(1.0135);">NA</div>
<div class="t" style="left:1091.2px;top:709.0px;font-size:21.5px;color:#828282;-webkit-text-stroke:0.4px #828282;transform:scaleX(0.8000);">?</div>
<div class="t" style="left:1419.4px;top:711.0px;font-size:32.5px;color:#111;-webkit-text-stroke:0.3px #111;transform:scaleX(1.0362);">1245</div>
<div class="t" style="left:1518.0px;top:712.5px;font-size:27.5px;color:#3bb54a;font-style:italic;-webkit-text-stroke:0.3px #3bb54a;transform:scaleX(0.9890);">+21.3%</div>
<div class="t" style="left:1763.4px;top:711.0px;font-size:32.5px;color:#111;-webkit-text-stroke:0.3px #111;transform:scaleX(1.0448);">1143</div>
<div class="t" style="left:1861.5px;top:712.5px;font-size:27.5px;color:#3bb54a;font-style:italic;-webkit-text-stroke:0.3px #3bb54a;transform:scaleX(0.9780);">+23.6%</div>
<svg class="ic" style="left:76.9px;top:799.5px;width:31.0px;height:31.0px"><use href="#i-yt"/></svg>
<div class="t" style="left:118.1px;top:804.5px;font-size:28px;color:#111;-webkit-text-stroke:0.3px #111;transform:scaleX(0.9364);">Zylker Travels</div>
<div class="t" style="left:704.0px;top:805.5px;font-size:32.5px;color:#111;-webkit-text-stroke:0.3px #111;transform:scaleX(1.0052);">37,700</div>
<div class="t" style="left:827.1px;top:805.5px;font-size:27.5px;color:#3bb54a;font-style:italic;-webkit-text-stroke:0.3px #3bb54a;transform:scaleX(0.9671);">+0.0%</div>
<div class="t" style="left:1048.0px;top:810.5px;font-size:28px;color:#828282;-webkit-text-stroke:0.3px #828282;transform:scaleX(1.0135);">NA</div>
<div class="t" style="left:1091.2px;top:806.5px;font-size:21.5px;color:#828282;-webkit-text-stroke:0.4px #828282;transform:scaleX(0.8000);">?</div>
<div class="t" style="left:1420.5px;top:802.5px;font-size:32.5px;color:#111;-webkit-text-stroke:0.3px #111;transform:scaleX(1.0141);">3214</div>
<div class="t" style="left:1518.0px;top:804.0px;font-size:27.5px;color:#3bb54a;font-style:italic;-webkit-text-stroke:0.3px #3bb54a;transform:scaleX(0.9890);">+32.6%</div>
<div class="t" style="left:1764.0px;top:802.5px;font-size:32.5px;color:#111;-webkit-text-stroke:0.3px #111;transform:scaleX(1.0192);">342</div>
<div class="t" style="left:1861.5px;top:804.0px;font-size:27.5px;color:#3bb54a;font-style:italic;-webkit-text-stroke:0.3px #3bb54a;transform:scaleX(0.9780);">+23.6%</div>
<div class="t" style="left:1706.6px;top:904.0px;font-size:28px;color:#111;-webkit-text-stroke:0.3px #111;transform:scaleX(0.9357);">Connect your Facebook Group</div>
<svg class="ic" style="left:2073.7px;top:901.0px;width:31.0px;height:31.0px"><use href="#i-grp"/></svg>
<section class="card" style="left:38px;top:1048px;width:2106px;height:451px;border-bottom:none;border-radius:8px 8px 0 0"></section>
<h2 class="t" style="left:76.2px;top:1092.3px;font-size:36px;color:#111;-webkit-text-stroke:1.05px #111;transform:scaleX(0.9052);">Recent Posts</h2>
<div class="vl" style="left:490.5px;top:1159px;height:340px;background:#e6e6e6"></div>
<div class="vl" style="left:924.5px;top:1159px;height:340px;background:#e6e6e6"></div>
<div class="vl" style="left:1358.0px;top:1159px;height:340px;background:#e6e6e6"></div>
<div class="vl" style="left:1792.0px;top:1159px;height:340px;background:#e6e6e6"></div>
<article>
<svg class="ic" style="left:88.7px;top:1169.0px;width:30.0px;height:30.0px"><use href="#i-fb"/></svg>
<h3 class="t" style="left:128.5px;top:1171.0px;font-size:27.5px;color:#111;-webkit-text-stroke:1.15px #111;transform:scaleX(0.9817);">ZylkerTravels</h3>
<div class="t" style="left:89.0px;top:1214.0px;font-size:25.5px;color:#111;-webkit-text-stroke:0.3px #111;transform:scaleX(0.9231);">via Zoho Social by</div>
<div class="t" style="left:286.5px;top:1213.0px;font-size:27px;color:#111;-webkit-text-stroke:0.3px #111;transform:scaleX(0.9798);">Sofia_lopz</div>
<div class="t" style="left:87.0px;top:1259.0px;font-size:25.5px;color:#8a8a8a;-webkit-text-stroke:0.3px #8a8a8a;transform:scaleX(0.9954);">18 Mar at 10:00 AM</div>
<div class="dot" style="left:89.0px;top:1308.500px;width:373.5px"></div>
<p class="t" style="left:87.1px;top:1335.5px;font-size:27.5px;color:#111;-webkit-text-stroke:0.3px #111;transform:scaleX(0.9691);">Hello! What are your summer</p>
<p class="t" style="left:89.0px;top:1373.0px;font-size:27.5px;color:#111;-webkit-text-stroke:0.3px #111;transform:scaleX(0.9316);">vacation plans?</p>
</article>
<article>
<svg class="ic" style="left:522.7px;top:1169.0px;width:30.0px;height:30.0px"><use href="#i-tw"/></svg>
<h3 class="t" style="left:562.0px;top:1171.0px;font-size:27.5px;color:#111;-webkit-text-stroke:1.15px #111;transform:scaleX(0.9817);">ZylkerTravels</h3>
<div class="t" style="left:523.0px;top:1214.0px;font-size:25.5px;color:#111;-webkit-text-stroke:0.3px #111;transform:scaleX(0.9207);">via Zoho Social by</div>
<div class="t" style="left:717.9px;top:1213.0px;font-size:27px;color:#111;-webkit-text-stroke:0.3px #111;transform:scaleX(1.0389);">Einhard</div>
<div class="t" style="left:521.0px;top:1259.0px;font-size:25.5px;color:#8a8a8a;-webkit-text-stroke:0.3px #8a8a8a;transform:scaleX(0.9818);">18 Mar at 01:00 PM</div>
<div class="dot" style="left:523.0px;top:1308.500px;width:373.5px"></div>
<p class="t" style="left:523.0px;top:1335.5px;font-size:27.5px;color:#111;-webkit-text-stroke:0.3px #111;transform:scaleX(0.9590);">Thank you!</p>
</article>
<article>
<svg class="ic" style="left:956.2px;top:1169.0px;width:30.0px;height:30.0px"><use href="#i-in"/></svg>
<h3 class="t" style="left:995.5px;top:1171.0px;font-size:27.5px;color:#111;-webkit-text-stroke:1.15px #111;transform:scaleX(0.9904);">Zylker Travel</h3>
<div class="t" style="left:956.5px;top:1214.0px;font-size:25.5px;color:#111;-webkit-text-stroke:0.3px #111;transform:scaleX(0.9231);">via Zoho Social by</div>
<div class="t" style="left:1154.0px;top:1213.0px;font-size:27px;color:#111;-webkit-text-stroke:0.3px #111;transform:scaleX(1.0154);">Charles</div>
<div class="t" style="left:954.5px;top:1259.0px;font-size:25.5px;color:#8a8a8a;-webkit-text-stroke:0.3px #8a8a8a;transform:scaleX(0.9954);">17 Mar at 10:00 AM</div>
<div class="dot" style="left:956.5px;top:1308.500px;width:373.5px"></div>
<p class="t" style="left:956.5px;top:1335.5px;font-size:27.5px;color:#111;-webkit-text-stroke:0.3px #111;transform:scaleX(0.9604);">What is your travel plans for</p>
<p class="t" style="left:955.6px;top:1373.0px;font-size:27.5px;color:#111;-webkit-text-stroke:0.3px #111;transform:scaleX(0.9409);">2021 Summer?</p>
</article>
<article>
<svg class="ic" style="left:1390.2px;top:1169.0px;width:30.0px;height:30.0px"><use href="#i-co"/></svg>
<h3 class="t" style="left:1429.5px;top:1171.0px;font-size:27.5px;color:#111;-webkit-text-stroke:1.15px #111;transform:scaleX(0.9708);">Zylker Travels</h3>
<div class="t" style="left:1390.5px;top:1214.0px;font-size:25.5px;color:#111;-webkit-text-stroke:0.3px #111;transform:scaleX(0.9183);">via Zoho Social by</div>
<div class="t" style="left:1590.5px;top:1213.0px;font-size:27px;color:#111;-webkit-text-stroke:0.3px #111;transform:scaleX(0.9758);">Sofia_lopz</div>
<div class="t" style="left:1388.5px;top:1259.0px;font-size:25.5px;color:#8a8a8a;-webkit-text-stroke:0.3px #8a8a8a;transform:scaleX(0.9954);">18 Mar at 10:00 AM</div>
<div class="dot" style="left:1390.5px;top:1308.500px;width:373.0px"></div>
<p class="t" style="left:1388.6px;top:1335.5px;font-size:27.5px;color:#111;-webkit-text-stroke:0.3px #111;transform:scaleX(0.9691);">Hello! What are your summer</p>
<p class="t" style="left:1390.5px;top:1373.0px;font-size:27.5px;color:#111;-webkit-text-stroke:0.3px #111;transform:scaleX(0.9316);">vacation plans?</p>
</article>
<article>
<svg class="ic" style="left:1823.7px;top:1169.0px;width:30.0px;height:30.0px"><use href="#i-ig"/></svg>
<h3 class="t" style="left:1862.5px;top:1171.0px;font-size:27.5px;color:#111;-webkit-text-stroke:1.15px #111;transform:scaleX(1.0166);">zylkertravels</h3>
<div class="t" style="left:1824.0px;top:1214.0px;font-size:25.5px;color:#111;-webkit-text-stroke:0.3px #111;transform:scaleX(0.9207);">via Zoho Social by</div>
<div class="t" style="left:2023.4px;top:1213.0px;font-size:27px;color:#111;-webkit-text-stroke:0.3px #111;transform:scaleX(1.0417);">Manish</div>
<div class="t" style="left:1823.0px;top:1259.0px;font-size:25.5px;color:#8a8a8a;-webkit-text-stroke:0.3px #8a8a8a;transform:scaleX(0.9734);">5 Mar at 08:18 PM</div>
<div class="dot" style="left:1824.0px;top:1308.500px;width:280.5px"></div>
</article>
<svg class="ic" style="left:1824px;top:1329.300px;width:281.300px;height:169.700px" viewBox="78 70 2122 1282" preserveAspectRatio="none">
<defs><clipPath id="pc"><path d="M78 1352V125a55 55 0 0 1 55-55H2200V1352z"/></clipPath>
<linearGradient id="psky" x1="0" y1="0" x2="1" y2="1"><stop offset="0" stop-color="#eab27c"/><stop offset=".55" stop-color="#f3c08f"/><stop offset="1" stop-color="#f3cdbd"/></linearGradient>
<linearGradient id="phill" x1="0" y1="0" x2="1" y2="0"><stop offset="0" stop-color="#6b6f2c"/><stop offset=".3" stop-color="#8b8a33"/><stop offset=".55" stop-color="#5f5f30"/><stop offset="1" stop-color="#5a5238"/></linearGradient>
<linearGradient id="ptown" x1="0" y1="0" x2="1" y2="0"><stop offset="0" stop-color="#9a8a62"/><stop offset=".4" stop-color="#b99683"/><stop offset="1" stop-color="#b48870"/></linearGradient>
<linearGradient id="psea" x1="0" y1="0" x2="0" y2="1"><stop offset="0" stop-color="#d9c3bd"/><stop offset=".18" stop-color="#a9bdbb"/><stop offset=".45" stop-color="#6fa3a8"/><stop offset="1" stop-color="#4f8a93"/></linearGradient>
<linearGradient id="phar" x1="0" y1="0" x2="1" y2="1"><stop offset="0" stop-color="#8c8f98"/><stop offset=".5" stop-color="#a39a9a"/><stop offset=".8" stop-color="#8a8f92"/><stop offset="1" stop-color="#6f8a8c"/></linearGradient>
<linearGradient id="pref" x1="0" y1="0" x2="0" y2="1"><stop offset="0" stop-color="#e9cdb6" stop-opacity=".9"/><stop offset="1" stop-color="#e9cdb6" stop-opacity=".25"/></linearGradient>
<filter id="pb" x="-5%" y="-5%" width="110%" height="110%"><feGaussianBlur stdDeviation="5"/></filter>
<filter id="pb2"><feGaussianBlur stdDeviation="2.2"/></filter>
</defs>
<g clip-path="url(#pc)">
<rect x="78" y="70" width="2122" height="1282" fill="url(#psky)"/>
<g filter="url(#pb)">
<path d="M60 200 820 80 1000 100 1200 150 1400 192 1700 215 1950 240 2220 268V1360H60z" fill="#6d6848"/>
<path d="M700 640 1700 660 1760 720 1180 760 800 820 500 900 300 900 500 780z" fill="#a89a88"/>
<path d="M60 60H820L1000 100 1200 150 1400 192 1700 215 1950 240 2220 268V420H60z" fill="url(#phill)"/>
<path d="M300 150 620 90 760 150 560 230 330 215z" fill="#a29a3c" opacity=".8"/>
<path d="M60 70H500L300 180 60 200z" fill="#565c2a" opacity=".8"/>
<path d="M1780 350 2220 318V560L1980 470 1850 400z" fill="#dcc7c2"/>
<path d="M60 215 400 195 900 235 1300 240 1800 265 2000 300 2100 330 1850 345 1900 420 1700 520 1120 470 1000 395 700 380 300 400 60 430z" fill="url(#ptown)"/>
<path d="M520 290 1000 300 1100 360 700 365 520 340z" fill="#cdb0a6"/>
<path d="M60 400 300 395 700 378 1000 392 1130 440 1120 560 1000 640 820 610 560 560 300 600 60 700z" fill="#3f4a24"/>
<path d="M300 420 700 400 900 450 700 520 400 500z" fill="#55602c" opacity=".8"/>
<path d="M1120 440 1300 430 1750 470 1900 420 1960 470 2080 640 2050 690 1700 700 1350 660 1240 580z" fill="#8f7a58"/>
<path d="M1200 430 1750 420 1760 520 1500 520 1250 500z" fill="#c49c8c"/>
<path d="M1760 420 1880 400 1920 470 1850 560 1780 540z" fill="#e2cc9c"/>
<path d="M1400 560 1640 500 1760 560 1960 600 1900 640 1500 620z" fill="#4c5228"/>
<path d="M1450 620 1980 610 2060 670 1900 700 1500 680z" fill="#b39a72"/>
<path d="M2060 450 2220 430V520L2100 520z" fill="#5b5a3c"/>
<path d="M1760 705 2060 690 1980 560 2220 520V1360H2190L2100 1130 1850 800z" fill="url(#psea)"/>
<path d="M150 640 420 600 560 575 720 580 730 640 480 690 330 715 160 700z" fill="#dcd3cf"/>
<path d="M160 640 330 620 330 650 165 668z" fill="#d98d62"/>
<path d="M430 590 560 570 565 585 435 606z" fill="#d98d62"/>
<path d="M820 570 1000 550 1250 610 1260 680 1100 700 850 620z" fill="#d9cdc8"/>
<path d="M1000 590 1180 585 1200 610 1020 615z" fill="#cf7a50"/>
<path d="M520 690 820 620 1010 625 1020 680 780 740 560 750z" fill="#4d6828"/>
<path d="M60 700 330 720 450 750 120 800 60 800z" fill="#4a5428"/>
<path d="M110 800 500 762 530 800 300 860 130 840z" fill="#d3c2ad"/>
<path d="M60 840 300 865 760 770 790 800 500 900 250 980 60 1050z" fill="#4f5e2b"/>
<path d="M960 690 1110 672 1130 720 980 745z" fill="#e8c9a0"/>
<path d="M60 1060 250 985 520 900 800 800 1180 740 1700 720 1760 940 2100 1180 2200 1352H60z" fill="url(#phar)"/>
<path d="M1380 980 1460 980 1450 1352 1400 1352z" fill="url(#pref)"/>
<path d="M1000 1100 1700 950 1900 1200 1500 1352 900 1352z" fill="#8c9395" opacity=".6"/>
<path d="M1680 700 1765 700 1900 860 2200 1150V1352H2150L2050 1180 1760 960z" fill="#8b8478"/>
<path d="M1720 705 1760 702 2200 1165V1230z" fill="#b4a894" opacity=".8"/>
<path d="M1690 720 1720 760 1790 960 1760 965z" fill="#6d675e"/>
<path d="M1130 1090 1440 950 1480 975 1250 1100 1160 1130z" fill="#c6ae8c"/>
<path d="M1400 930 1440 920 1460 980 1410 1000z" fill="#eee6dc"/>
<path d="M60 1080 250 1050 500 1040 900 1090 1130 1100 1120 1150 600 1140 60 1160z" fill="#8e5f45"/>
<path d="M100 1100 380 1060 390 1110 110 1150z" fill="#9a4c3e"/>
<path d="M390 1040 560 1050 700 1075 690 1100 400 1080z" fill="#d8703f"/>
<path d="M500 1075 900 1085 900 1115 500 1110z" fill="#e6dbd0"/>
<path d="M60 1150 600 1140 1120 1150 1400 1200 1410 1230 1300 1250 700 1190 60 1200z" fill="#7f7b76"/>
<path d="M1130 1150 1330 1165 1350 1200 1150 1195z" fill="#d9d2c8"/>
<path d="M60 1160 250 1150 260 1210 60 1225z" fill="#8b8a35"/>
<path d="M60 1225 400 1180 680 1190 400 1260 60 1352z" fill="#e3c7ad"/>
<path d="M60 1245 380 1200 520 1200 200 1275 60 1300z" fill="#f0e6dc" opacity=".8"/>
<path d="M60 1352 400 1262 700 1195 1300 1255 1700 1280 2100 1352z" fill="#7d9696"/>
<path d="M2020 1230 2100 1190 2190 1352 2100 1300z" fill="#9aa39c"/>
</g>
<g filter="url(#pb2)">
<rect x="416" y="429" width="46" height="13" fill="#2a3418" opacity="0.55"/>
<rect x="177" y="529" width="56" height="15" fill="#2f3a1a" opacity="0.55"/>
<rect x="530" y="411" width="23" height="19" fill="#2a3418" opacity="0.55"/>
<rect x="208" y="446" width="45" height="29" fill="#2a3418" opacity="0.55"/>
<rect x="688" y="406" width="28" height="22" fill="#38451f" opacity="0.55"/>
<rect x="381" y="428" width="24" height="17" fill="#58662a" opacity="0.55"/>
<rect x="267" y="528" width="45" height="18" fill="#2a3418" opacity="0.55"/>
<rect x="820" y="524" width="44" height="20" fill="#2a3418" opacity="0.55"/>
<rect x="524" y="467" width="43" height="20" fill="#4f5c28" opacity="0.55"/>
<rect x="338" y="436" width="51" height="13" fill="#4f5c28" opacity="0.55"/>
<rect x="626" y="596" width="49" height="17" fill="#2f3a1a" opacity="0.55"/>
<rect x="202" y="491" width="50" height="14" fill="#66702c" opacity="0.55"/>
<rect x="518" y="616" width="23" height="22" fill="#4f5c28" opacity="0.55"/>
<rect x="433" y="475" width="39" height="26" fill="#2f3a1a" opacity="0.55"/>
<rect x="953" y="612" width="38" height="23" fill="#2f3a1a" opacity="0.55"/>
<rect x="840" y="466" width="43" height="24" fill="#66702c" opacity="0.55"/>
<rect x="375" y="483" width="46" height="12" fill="#66702c" opacity="0.55"/>
<rect x="449" y="535" width="39" height="15" fill="#4f5c28" opacity="0.55"/>
<rect x="214" y="451" width="35" height="27" fill="#2f3a1a" opacity="0.55"/>
<rect x="253" y="487" width="31" height="14" fill="#66702c" opacity="0.55"/>
<rect x="978" y="459" width="36" height="18" fill="#66702c" opacity="0.55"/>
<rect x="1076" y="429" width="27" height="16" fill="#38451f" opacity="0.55"/>
<rect x="92" y="586" width="27" height="17" fill="#38451f" opacity="0.55"/>
<rect x="515" y="479" width="42" height="29" fill="#58662a" opacity="0.55"/>
<rect x="973" y="613" width="46" height="25" fill="#66702c" opacity="0.55"/>
<rect x="1015" y="574" width="54" height="26" fill="#66702c" opacity="0.55"/>
<rect x="493" y="485" width="39" height="19" fill="#38451f" opacity="0.55"/>
<rect x="150" y="443" width="26" height="18" fill="#2f3a1a" opacity="0.55"/>
<rect x="186" y="525" width="41" height="29" fill="#2a3418" opacity="0.55"/>
<rect x="106" y="596" width="44" height="14" fill="#4f5c28" opacity="0.55"/>
<rect x="1073" y="533" width="38" height="14" fill="#66702c" opacity="0.55"/>
<rect x="1112" y="502" width="39" height="13" fill="#2f3a1a" opacity="0.55"/>
<rect x="859" y="565" width="39" height="24" fill="#2a3418" opacity="0.55"/>
<rect x="104" y="613" width="41" height="14" fill="#2a3418" opacity="0.55"/>
<rect x="1030" y="569" width="31" height="23" fill="#2f3a1a" opacity="0.55"/>
<rect x="804" y="455" width="34" height="15" fill="#38451f" opacity="0.55"/>
<rect x="633" y="574" width="33" height="16" fill="#38451f" opacity="0.55"/>
<rect x="918" y="583" width="49" height="16" fill="#2a3418" opacity="0.55"/>
<rect x="592" y="563" width="59" height="26" fill="#66702c" opacity="0.55"/>
<rect x="349" y="554" width="58" height="20" fill="#58662a" opacity="0.55"/>
<rect x="1107" y="614" width="34" height="15" fill="#38451f" opacity="0.55"/>
<rect x="568" y="472" width="39" height="29" fill="#2a3418" opacity="0.55"/>
<rect x="954" y="505" width="46" height="26" fill="#2f3a1a" opacity="0.55"/>
<rect x="948" y="422" width="35" height="24" fill="#38451f" opacity="0.55"/>
<rect x="577" y="436" width="51" height="17" fill="#58662a" opacity="0.55"/>
<rect x="491" y="487" width="57" height="25" fill="#38451f" opacity="0.55"/>
<rect x="1112" y="401" width="43" height="20" fill="#58662a" opacity="0.55"/>
<rect x="232" y="585" width="59" height="23" fill="#4f5c28" opacity="0.55"/>
<rect x="242" y="521" width="20" height="26" fill="#58662a" opacity="0.55"/>
<rect x="755" y="516" width="57" height="19" fill="#38451f" opacity="0.55"/>
<rect x="939" y="443" width="30" height="17" fill="#38451f" opacity="0.55"/>
<rect x="874" y="469" width="41" height="27" fill="#2f3a1a" opacity="0.55"/>
<rect x="1026" y="476" width="38" height="22" fill="#2a3418" opacity="0.55"/>
<rect x="517" y="606" width="40" height="21" fill="#2a3418" opacity="0.55"/>
<rect x="610" y="595" width="51" height="22" fill="#38451f" opacity="0.55"/>
<rect x="259" y="503" width="49" height="22" fill="#4f5c28" opacity="0.55"/>
<rect x="789" y="517" width="39" height="25" fill="#2a3418" opacity="0.55"/>
<rect x="139" y="439" width="21" height="13" fill="#66702c" opacity="0.55"/>
<rect x="664" y="569" width="56" height="19" fill="#2a3418" opacity="0.55"/>
<rect x="1092" y="534" width="27" height="16" fill="#2a3418" opacity="0.55"/>
<rect x="634" y="504" width="57" height="24" fill="#4f5c28" opacity="0.55"/>
<rect x="1039" y="600" width="28" height="20" fill="#66702c" opacity="0.55"/>
<rect x="206" y="496" width="22" height="16" fill="#2f3a1a" opacity="0.55"/>
<rect x="301" y="464" width="24" height="25" fill="#58662a" opacity="0.55"/>
<rect x="749" y="479" width="30" height="14" fill="#66702c" opacity="0.55"/>
<rect x="308" y="614" width="35" height="20" fill="#58662a" opacity="0.55"/>
<rect x="945" y="432" width="37" height="21" fill="#4f5c28" opacity="0.55"/>
<rect x="518" y="477" width="23" height="18" fill="#4f5c28" opacity="0.55"/>
<rect x="656" y="496" width="20" height="17" fill="#2a3418" opacity="0.55"/>
<rect x="387" y="615" width="24" height="28" fill="#38451f" opacity="0.55"/>
<rect x="1362" y="181" width="43" height="10" fill="#7d8230" opacity="0.50"/>
<rect x="436" y="94" width="51" height="24" fill="#9a9638" opacity="0.50"/>
<rect x="615" y="139" width="55" height="17" fill="#9a9638" opacity="0.50"/>
<rect x="198" y="86" width="64" height="16" fill="#4f5524" opacity="0.50"/>
<rect x="434" y="81" width="34" height="14" fill="#434a20" opacity="0.50"/>
<rect x="1210" y="152" width="73" height="17" fill="#9a9638" opacity="0.50"/>
<rect x="1392" y="220" width="75" height="19" fill="#4f5524" opacity="0.50"/>
<rect x="775" y="106" width="35" height="12" fill="#4f5524" opacity="0.50"/>
<rect x="319" y="182" width="61" height="18" fill="#7d8230" opacity="0.50"/>
<rect x="462" y="135" width="38" height="15" fill="#4f5524" opacity="0.50"/>
<rect x="1392" y="178" width="30" height="18" fill="#7d8230" opacity="0.50"/>
<rect x="758" y="107" width="52" height="20" fill="#5a5e28" opacity="0.50"/>
<rect x="946" y="163" width="74" height="25" fill="#9a9638" opacity="0.50"/>
<rect x="987" y="218" width="47" height="23" fill="#7d8230" opacity="0.50"/>
<rect x="614" y="118" width="32" height="12" fill="#4f5524" opacity="0.50"/>
<rect x="905" y="193" width="51" height="10" fill="#5a5e28" opacity="0.50"/>
<rect x="1229" y="222" width="44" height="13" fill="#9a9638" opacity="0.50"/>
<rect x="139" y="100" width="43" height="10" fill="#9a9638" opacity="0.50"/>
<rect x="1349" y="274" width="57" height="13" fill="#9a9638" opacity="0.50"/>
<rect x="367" y="100" width="46" height="11" fill="#9a9638" opacity="0.50"/>
<rect x="743" y="102" width="55" height="10" fill="#9a9638" opacity="0.50"/>
<rect x="1158" y="153" width="59" height="16" fill="#9a9638" opacity="0.50"/>
<rect x="481" y="105" width="59" height="18" fill="#7d8230" opacity="0.50"/>
<rect x="947" y="182" width="73" height="16" fill="#9a9638" opacity="0.50"/>
<rect x="1031" y="171" width="44" height="19" fill="#7d8230" opacity="0.50"/>
<rect x="137" y="171" width="74" height="20" fill="#434a20" opacity="0.50"/>
<rect x="263" y="137" width="55" height="23" fill="#4f5524" opacity="0.50"/>
<rect x="1170" y="203" width="74" height="20" fill="#7d8230" opacity="0.50"/>
<rect x="192" y="84" width="61" height="25" fill="#5a5e28" opacity="0.50"/>
<rect x="1183" y="202" width="61" height="20" fill="#7d8230" opacity="0.50"/>
<rect x="725" y="80" width="69" height="21" fill="#434a20" opacity="0.50"/>
<rect x="1265" y="164" width="56" height="21" fill="#5a5e28" opacity="0.50"/>
<rect x="412" y="88" width="43" height="21" fill="#7d8230" opacity="0.50"/>
<rect x="384" y="151" width="53" height="23" fill="#4f5524" opacity="0.50"/>
<rect x="712" y="155" width="68" height="19" fill="#7d8230" opacity="0.50"/>
<rect x="182" y="96" width="42" height="21" fill="#9a9638" opacity="0.50"/>
<rect x="899" y="110" width="54" height="17" fill="#4f5524" opacity="0.50"/>
<rect x="993" y="185" width="44" height="18" fill="#5a5e28" opacity="0.50"/>
<rect x="694" y="164" width="79" height="18" fill="#9a9638" opacity="0.50"/>
<rect x="1371" y="274" width="30" height="17" fill="#434a20" opacity="0.50"/>
<rect x="1357" y="218" width="43" height="13" fill="#7d8230" opacity="0.50"/>
<rect x="178" y="89" width="67" height="14" fill="#9a9638" opacity="0.50"/>
<rect x="255" y="170" width="55" height="24" fill="#9a9638" opacity="0.50"/>
<rect x="385" y="178" width="54" height="10" fill="#4f5524" opacity="0.50"/>
<rect x="1333" y="240" width="50" height="21" fill="#5a5e28" opacity="0.50"/>
<rect x="313" y="958" width="45" height="10" fill="#4f5c28" opacity="0.50"/>
<rect x="650" y="854" width="47" height="19" fill="#58662a" opacity="0.50"/>
<rect x="277" y="972" width="31" height="23" fill="#2a3418" opacity="0.50"/>
<rect x="131" y="1050" width="42" height="21" fill="#4f5c28" opacity="0.50"/>
<rect x="149" y="1039" width="28" height="23" fill="#38451f" opacity="0.50"/>
<rect x="740" y="852" width="29" height="20" fill="#66702c" opacity="0.50"/>
<rect x="681" y="894" width="38" height="22" fill="#2a3418" opacity="0.50"/>
<rect x="453" y="949" width="21" height="20" fill="#66702c" opacity="0.50"/>
<rect x="498" y="896" width="46" height="16" fill="#2a3418" opacity="0.50"/>
<rect x="166" y="1009" width="30" height="14" fill="#58662a" opacity="0.50"/>
<rect x="582" y="910" width="32" height="13" fill="#66702c" opacity="0.50"/>
<rect x="458" y="925" width="25" height="12" fill="#38451f" opacity="0.50"/>
<rect x="420" y="964" width="36" height="16" fill="#4f5c28" opacity="0.50"/>
<rect x="757" y="848" width="24" height="12" fill="#2f3a1a" opacity="0.50"/>
<rect x="198" y="1006" width="29" height="15" fill="#2a3418" opacity="0.50"/>
<rect x="217" y="964" width="46" height="15" fill="#58662a" opacity="0.50"/>
<rect x="436" y="930" width="30" height="10" fill="#4f5c28" opacity="0.50"/>
<rect x="470" y="919" width="40" height="17" fill="#38451f" opacity="0.50"/>
<rect x="142" y="1045" width="31" height="19" fill="#66702c" opacity="0.50"/>
<rect x="728" y="884" width="46" height="10" fill="#2f3a1a" opacity="0.50"/>
<rect x="369" y="975" width="44" height="23" fill="#66702c" opacity="0.50"/>
<rect x="80" y="1027" width="47" height="21" fill="#66702c" opacity="0.50"/>
<rect x="741" y="838" width="23" height="12" fill="#2a3418" opacity="0.50"/>
<rect x="740" y="829" width="44" height="19" fill="#66702c" opacity="0.50"/>
<rect x="137" y="1038" width="20" height="11" fill="#2a3418" opacity="0.50"/>
<rect x="705" y="876" width="29" height="11" fill="#4f5c28" opacity="0.50"/>
<rect x="439" y="933" width="42" height="11" fill="#4f5c28" opacity="0.50"/>
<rect x="436" y="944" width="31" height="13" fill="#2a3418" opacity="0.50"/>
<rect x="80" y="1037" width="49" height="13" fill="#4f5c28" opacity="0.50"/>
<rect x="518" y="943" width="34" height="13" fill="#38451f" opacity="0.50"/>
<rect x="1397" y="585" width="39" height="10" fill="#38451f" opacity="0.50"/>
<rect x="1678" y="618" width="32" height="13" fill="#58662a" opacity="0.50"/>
<rect x="1634" y="597" width="34" height="18" fill="#58662a" opacity="0.50"/>
<rect x="1632" y="616" width="25" height="19" fill="#58662a" opacity="0.50"/>
<rect x="1887" y="594" width="34" height="12" fill="#38451f" opacity="0.50"/>
<rect x="1518" y="581" width="42" height="13" fill="#2a3418" opacity="0.50"/>
<rect x="1677" y="589" width="26" height="15" fill="#58662a" opacity="0.50"/>
<rect x="1413" y="597" width="47" height="10" fill="#2f3a1a" opacity="0.50"/>
<rect x="1964" y="603" width="21" height="10" fill="#66702c" opacity="0.50"/>
<rect x="1649" y="618" width="29" height="11" fill="#2f3a1a" opacity="0.50"/>
<rect x="1938" y="613" width="25" height="21" fill="#58662a" opacity="0.50"/>
<rect x="1660" y="595" width="41" height="20" fill="#4f5c28" opacity="0.50"/>
<rect x="1645" y="582" width="22" height="10" fill="#66702c" opacity="0.50"/>
<rect x="1953" y="601" width="48" height="12" fill="#4f5c28" opacity="0.50"/>
<rect x="1841" y="606" width="44" height="11" fill="#58662a" opacity="0.50"/>
<rect x="1664" y="599" width="47" height="12" fill="#4f5c28" opacity="0.50"/>
<rect x="1822" y="615" width="38" height="12" fill="#58662a" opacity="0.50"/>
<rect x="1840" y="590" width="21" height="10" fill="#2f3a1a" opacity="0.50"/>
<rect x="1534" y="614" width="46" height="14" fill="#4f5c28" opacity="0.50"/>
<rect x="1580" y="629" width="21" height="18" fill="#58662a" opacity="0.50"/>
<rect x="1569" y="587" width="20" height="19" fill="#58662a" opacity="0.50"/>
<rect x="1947" y="597" width="44" height="11" fill="#58662a" opacity="0.50"/>
<rect x="1954" y="651" width="31" height="13" fill="#66702c" opacity="0.50"/>
<rect x="1868" y="597" width="34" height="10" fill="#58662a" opacity="0.50"/>
<rect x="1561" y="612" width="24" height="12" fill="#4f5c28" opacity="0.50"/>
<rect x="1968" y="1167" width="43" height="6" fill="#a9c6c6" opacity="0.45"/>
<rect x="2088" y="1110" width="22" height="4" fill="#4a848e" opacity="0.45"/>
<rect x="1845" y="926" width="24" height="4" fill="#8fb9bb" opacity="0.45"/>
<rect x="1865" y="944" width="59" height="8" fill="#5f9aa2" opacity="0.45"/>
<rect x="1876" y="953" width="44" height="7" fill="#8fb9bb" opacity="0.45"/>
<rect x="2099" y="1136" width="31" height="5" fill="#4a848e" opacity="0.45"/>
<rect x="2082" y="1088" width="29" height="5" fill="#5f9aa2" opacity="0.45"/>
<rect x="1895" y="1134" width="27" height="4" fill="#4a848e" opacity="0.45"/>
<rect x="2186" y="1294" width="29" height="8" fill="#a9c6c6" opacity="0.45"/>
<rect x="2186" y="1160" width="38" height="8" fill="#a9c6c6" opacity="0.45"/>
<rect x="2154" y="1108" width="31" height="4" fill="#5f9aa2" opacity="0.45"/>
<rect x="2026" y="1239" width="27" height="4" fill="#5f9aa2" opacity="0.45"/>
<rect x="1964" y="989" width="51" height="8" fill="#8fb9bb" opacity="0.45"/>
<rect x="2041" y="1215" width="33" height="4" fill="#4a848e" opacity="0.45"/>
<rect x="1837" y="845" width="30" height="6" fill="#5f9aa2" opacity="0.45"/>
<rect x="2114" y="1324" width="36" height="5" fill="#4a848e" opacity="0.45"/>
<rect x="1811" y="762" width="39" height="6" fill="#a9c6c6" opacity="0.45"/>
<rect x="1821" y="892" width="42" height="7" fill="#8fb9bb" opacity="0.45"/>
<rect x="2047" y="1119" width="30" height="8" fill="#4a848e" opacity="0.45"/>
<rect x="1951" y="908" width="49" height="8" fill="#a9c6c6" opacity="0.45"/>
<rect x="1950" y="1175" width="59" height="5" fill="#5f9aa2" opacity="0.45"/>
<rect x="1940" y="1013" width="57" height="6" fill="#5f9aa2" opacity="0.45"/>
<rect x="1953" y="1164" width="36" height="8" fill="#a9c6c6" opacity="0.45"/>
<rect x="2096" y="1079" width="22" height="4" fill="#a9c6c6" opacity="0.45"/>
<rect x="1816" y="961" width="34" height="6" fill="#5f9aa2" opacity="0.45"/>
<rect x="1922" y="916" width="26" height="4" fill="#a9c6c6" opacity="0.45"/>
<rect x="1981" y="1186" width="58" height="4" fill="#5f9aa2" opacity="0.45"/>
<rect x="2123" y="1077" width="56" height="5" fill="#a9c6c6" opacity="0.45"/>
<rect x="1815" y="990" width="47" height="8" fill="#5f9aa2" opacity="0.45"/>
<rect x="2034" y="1177" width="27" height="6" fill="#5f9aa2" opacity="0.45"/>
<rect x="1797" y="1046" width="26" height="5" fill="#5f9aa2" opacity="0.45"/>
<rect x="1881" y="1060" width="55" height="4" fill="#8fb9bb" opacity="0.45"/>
<rect x="2053" y="1100" width="35" height="6" fill="#4a848e" opacity="0.45"/>
<rect x="2046" y="1087" width="29" height="5" fill="#4a848e" opacity="0.45"/>
<rect x="1963" y="1047" width="20" height="7" fill="#a9c6c6" opacity="0.45"/>
<rect x="1970" y="1058" width="44" height="8" fill="#5f9aa2" opacity="0.45"/>
<rect x="2112" y="1184" width="22" height="5" fill="#4a848e" opacity="0.45"/>
<rect x="1817" y="903" width="40" height="4" fill="#5f9aa2" opacity="0.45"/>
<rect x="1813" y="995" width="51" height="6" fill="#8fb9bb" opacity="0.45"/>
<rect x="2088" y="1323" width="46" height="7" fill="#8fb9bb" opacity="0.45"/>
<rect x="1499" y="1339" width="73" height="8" fill="#b5a7a2" opacity="0.40"/>
<rect x="484" y="1312" width="47" height="8" fill="#b5a7a2" opacity="0.40"/>
<rect x="1260" y="1273" width="43" height="8" fill="#6f7a80" opacity="0.40"/>
<rect x="1358" y="1138" width="83" height="5" fill="#c9b8ac" opacity="0.40"/>
<rect x="501" y="1220" width="85" height="5" fill="#9aa0a4" opacity="0.40"/>
<rect x="1162" y="1156" width="52" height="4" fill="#c9b8ac" opacity="0.40"/>
<rect x="525" y="1324" width="70" height="8" fill="#b5a7a2" opacity="0.40"/>
<rect x="1408" y="1163" width="76" height="4" fill="#9aa0a4" opacity="0.40"/>
<rect x="1652" y="1208" width="61" height="7" fill="#7f858c" opacity="0.40"/>
<rect x="652" y="1228" width="81" height="7" fill="#9aa0a4" opacity="0.40"/>
<rect x="670" y="1337" width="64" height="5" fill="#7f858c" opacity="0.40"/>
<rect x="919" y="1142" width="74" height="4" fill="#6f7a80" opacity="0.40"/>
<rect x="655" y="1253" width="89" height="6" fill="#9aa0a4" opacity="0.40"/>
<rect x="1326" y="1279" width="43" height="5" fill="#c9b8ac" opacity="0.40"/>
<rect x="884" y="1187" width="32" height="6" fill="#6f7a80" opacity="0.40"/>
<rect x="1214" y="1105" width="30" height="5" fill="#7f858c" opacity="0.40"/>
<rect x="1032" y="1228" width="54" height="5" fill="#b5a7a2" opacity="0.40"/>
<rect x="585" y="1249" width="58" height="4" fill="#b5a7a2" opacity="0.40"/>
<rect x="1290" y="1208" width="33" height="4" fill="#9aa0a4" opacity="0.40"/>
<rect x="862" y="1163" width="30" height="7" fill="#6f7a80" opacity="0.40"/>
<rect x="1549" y="1242" width="64" height="7" fill="#6f7a80" opacity="0.40"/>
<rect x="1326" y="1159" width="84" height="4" fill="#6f7a80" opacity="0.40"/>
<rect x="335" y="1144" width="39" height="8" fill="#7f858c" opacity="0.40"/>
<rect x="317" y="1232" width="86" height="4" fill="#b5a7a2" opacity="0.40"/>
<rect x="1025" y="1254" width="68" height="6" fill="#6f7a80" opacity="0.40"/>
<rect x="544" y="1174" width="48" height="4" fill="#c9b8ac" opacity="0.40"/>
<rect x="1301" y="1101" width="80" height="7" fill="#c9b8ac" opacity="0.40"/>
<rect x="412" y="1257" width="40" height="8" fill="#9aa0a4" opacity="0.40"/>
<rect x="625" y="1109" width="50" height="7" fill="#9aa0a4" opacity="0.40"/>
<rect x="1296" y="1163" width="63" height="6" fill="#6f7a80" opacity="0.40"/>
<rect x="1660" y="1170" width="85" height="8" fill="#7f858c" opacity="0.40"/>
<rect x="1532" y="1103" width="45" height="5" fill="#b5a7a2" opacity="0.40"/>
<rect x="1622" y="1279" width="49" height="8" fill="#9aa0a4" opacity="0.40"/>
<rect x="1141" y="1191" width="81" height="8" fill="#6f7a80" opacity="0.40"/>
<rect x="957" y="1301" width="71" height="8" fill="#c9b8ac" opacity="0.40"/>
<rect x="1637" y="1156" width="83" height="7" fill="#c9b8ac" opacity="0.40"/>
<rect x="1171" y="1118" width="84" height="4" fill="#7f858c" opacity="0.40"/>
<rect x="456" y="1249" width="39" height="8" fill="#7f858c" opacity="0.40"/>
<rect x="343" y="1133" width="68" height="4" fill="#7f858c" opacity="0.40"/>
<rect x="1331" y="1115" width="65" height="5" fill="#6f7a80" opacity="0.40"/>
<rect x="1547" y="1115" width="82" height="8" fill="#c9b8ac" opacity="0.40"/>
<rect x="449" y="1149" width="36" height="4" fill="#7f858c" opacity="0.40"/>
<rect x="1455" y="1251" width="47" height="4" fill="#7f858c" opacity="0.40"/>
<rect x="1408" y="1255" width="47" height="5" fill="#9aa0a4" opacity="0.40"/>
<rect x="329" y="1161" width="46" height="7" fill="#9aa0a4" opacity="0.40"/>
<rect x="1574" y="1284" width="66" height="6" fill="#9aa0a4" opacity="0.40"/>
<rect x="1165" y="1107" width="54" height="6" fill="#7f858c" opacity="0.40"/>
<rect x="785" y="1269" width="62" height="5" fill="#7f858c" opacity="0.40"/>
<rect x="1104" y="1168" width="56" height="6" fill="#9aa0a4" opacity="0.40"/>
<rect x="1367" y="1334" width="30" height="6" fill="#c9b8ac" opacity="0.40"/>
<rect x="1273" y="1298" width="88" height="6" fill="#6f7a80" opacity="0.40"/>
<rect x="664" y="1326" width="47" height="5" fill="#b5a7a2" opacity="0.40"/>
<rect x="997" y="1126" width="68" height="4" fill="#6f7a80" opacity="0.40"/>
<rect x="1401" y="1250" width="51" height="6" fill="#c9b8ac" opacity="0.40"/>
<rect x="1548" y="1278" width="55" height="7" fill="#9aa0a4" opacity="0.40"/>
<rect x="588" y="1163" width="84" height="6" fill="#c9b8ac" opacity="0.40"/>
<rect x="1675" y="1251" width="86" height="4" fill="#6f7a80" opacity="0.40"/>
<rect x="1356" y="1280" width="68" height="5" fill="#9aa0a4" opacity="0.40"/>
<rect x="1030" y="1308" width="57" height="6" fill="#9aa0a4" opacity="0.40"/>
<rect x="537" y="1205" width="76" height="6" fill="#b5a7a2" opacity="0.40"/>
<rect x="694" y="332" width="26" height="14" fill="#b9796a" opacity="0.90"/>
<rect x="635" y="338" width="30" height="9" fill="#c9836a" opacity="0.90"/>
<rect x="1854" y="395" width="24" height="12" fill="#f0e4da" opacity="0.90"/>
<rect x="683" y="268" width="33" height="16" fill="#d9a08a" opacity="0.90"/>
<rect x="387" y="320" width="14" height="9" fill="#c9836a" opacity="0.90"/>
<rect x="1528" y="382" width="20" height="10" fill="#d9a08a" opacity="0.90"/>
<rect x="598" y="361" width="21" height="8" fill="#a8806c" opacity="0.90"/>
<rect x="1345" y="341" width="25" height="13" fill="#c9836a" opacity="0.90"/>
<rect x="555" y="339" width="10" height="10" fill="#a8806c" opacity="0.90"/>
<rect x="1359" y="354" width="25" height="18" fill="#f0e4da" opacity="0.90"/>
<rect x="1320" y="360" width="20" height="11" fill="#d9a08a" opacity="0.90"/>
<rect x="1709" y="321" width="19" height="16" fill="#c9836a" opacity="0.90"/>
<rect x="542" y="294" width="20" height="15" fill="#a8806c" opacity="0.90"/>
<rect x="1028" y="349" width="30" height="18" fill="#e2c0b0" opacity="0.90"/>
<rect x="1498" y="332" width="21" height="19" fill="#e9d5cb" opacity="0.90"/>
<rect x="544" y="265" width="27" height="19" fill="#f0e4da" opacity="0.90"/>
<rect x="1029" y="271" width="23" height="14" fill="#d8b6a6" opacity="0.90"/>
<rect x="1017" y="346" width="29" height="14" fill="#a8806c" opacity="0.90"/>
<rect x="1433" y="339" width="33" height="10" fill="#d9a08a" opacity="0.90"/>
<rect x="1409" y="360" width="25" height="11" fill="#a8806c" opacity="0.90"/>
<rect x="813" y="249" width="20" height="13" fill="#e2c0b0" opacity="0.90"/>
<rect x="1140" y="277" width="17" height="12" fill="#f0e4da" opacity="0.90"/>
<rect x="1889" y="430" width="21" height="9" fill="#d9a08a" opacity="0.90"/>
<rect x="1555" y="369" width="21" height="14" fill="#f0e4da" opacity="0.90"/>
<rect x="1564" y="301" width="25" height="17" fill="#a8806c" opacity="0.90"/>
<rect x="937" y="294" width="23" height="9" fill="#d8b6a6" opacity="0.90"/>
<rect x="732" y="362" width="16" height="12" fill="#b9796a" opacity="0.90"/>
<rect x="1869" y="390" width="21" height="17" fill="#b9796a" opacity="0.90"/>
<rect x="737" y="335" width="17" height="13" fill="#d9a08a" opacity="0.90"/>
<rect x="1283" y="319" width="32" height="18" fill="#e9d5cb" opacity="0.90"/>
<rect x="244" y="300" width="17" height="19" fill="#e2c0b0" opacity="0.90"/>
<rect x="1236" y="268" width="10" height="19" fill="#b9796a" opacity="0.90"/>
<rect x="542" y="249" width="13" height="10" fill="#d8b6a6" opacity="0.90"/>
<rect x="717" y="264" width="31" height="17" fill="#c9836a" opacity="0.90"/>
<rect x="1193" y="360" width="33" height="9" fill="#b9796a" opacity="0.90"/>
<rect x="447" y="328" width="22" height="16" fill="#d8b6a6" opacity="0.90"/>
<rect x="1304" y="286" width="12" height="13" fill="#c9836a" opacity="0.90"/>
<rect x="946" y="331" width="21" height="18" fill="#d8b6a6" opacity="0.90"/>
<rect x="536" y="258" width="24" height="16" fill="#c9836a" opacity="0.90"/>
<rect x="1611" y="348" width="23" height="15" fill="#d8b6a6" opacity="0.90"/>
<rect x="768" y="304" width="33" height="8" fill="#e2c0b0" opacity="0.90"/>
<rect x="1241" y="270" width="24" height="16" fill="#e2c0b0" opacity="0.90"/>
<rect x="1553" y="294" width="21" height="17" fill="#c9836a" opacity="0.90"/>
<rect x="151" y="318" width="25" height="12" fill="#e2c0b0" opacity="0.90"/>
<rect x="707" y="351" width="23" height="18" fill="#b9796a" opacity="0.90"/>
<rect x="877" y="309" width="23" height="17" fill="#b9796a" opacity="0.90"/>
<rect x="732" y="313" width="18" height="19" fill="#e2c0b0" opacity="0.90"/>
<rect x="1854" y="386" width="29" height="11" fill="#e2c0b0" opacity="0.90"/>
<rect x="1380" y="290" width="33" height="9" fill="#e9d5cb" opacity="0.90"/>
<rect x="811" y="325" width="19" height="14" fill="#a8806c" opacity="0.90"/>
<rect x="633" y="240" width="14" height="19" fill="#e9d5cb" opacity="0.90"/>
<rect x="1518" y="406" width="24" height="15" fill="#d9a08a" opacity="0.90"/>
<rect x="474" y="325" width="20" height="17" fill="#d9a08a" opacity="0.90"/>
<rect x="1291" y="390" width="20" height="9" fill="#e9d5cb" opacity="0.90"/>
<rect x="757" y="360" width="28" height="14" fill="#b9796a" opacity="0.90"/>
<rect x="1651" y="311" width="10" height="8" fill="#e9d5cb" opacity="0.90"/>
<rect x="990" y="328" width="29" height="17" fill="#a8806c" opacity="0.90"/>
<rect x="1131" y="390" width="20" height="8" fill="#a8806c" opacity="0.90"/>
<rect x="1164" y="402" width="25" height="9" fill="#a8806c" opacity="0.90"/>
<rect x="1083" y="271" width="21" height="18" fill="#e9d5cb" opacity="0.90"/>
<rect x="862" y="251" width="26" height="19" fill="#d9a08a" opacity="0.90"/>
<rect x="485" y="249" width="21" height="11" fill="#f0e4da" opacity="0.90"/>
<rect x="905" y="355" width="32" height="12" fill="#c9836a" opacity="0.90"/>
<rect x="1410" y="286" width="25" height="16" fill="#d8b6a6" opacity="0.90"/>
<rect x="1301" y="394" width="31" height="8" fill="#e9d5cb" opacity="0.90"/>
<rect x="110" y="217" width="25" height="17" fill="#d9a08a" opacity="0.90"/>
<rect x="793" y="290" width="24" height="19" fill="#d8b6a6" opacity="0.90"/>
<rect x="1192" y="308" width="32" height="16" fill="#d8b6a6" opacity="0.90"/>
<rect x="1315" y="290" width="29" height="12" fill="#c9836a" opacity="0.90"/>
<rect x="1229" y="324" width="19" height="17" fill="#b9796a" opacity="0.90"/>
<rect x="1510" y="358" width="17" height="8" fill="#e2c0b0" opacity="0.90"/>
<rect x="1663" y="387" width="10" height="9" fill="#b9796a" opacity="0.90"/>
<rect x="1148" y="399" width="15" height="12" fill="#a8806c" opacity="0.90"/>
<rect x="1179" y="389" width="29" height="11" fill="#e9d5cb" opacity="0.90"/>
<rect x="671" y="278" width="13" height="19" fill="#e9d5cb" opacity="0.90"/>
<rect x="612" y="258" width="31" height="19" fill="#c9836a" opacity="0.90"/>
<rect x="585" y="356" width="29" height="16" fill="#d8b6a6" opacity="0.90"/>
<rect x="717" y="255" width="23" height="17" fill="#f0e4da" opacity="0.90"/>
<rect x="1515" y="380" width="33" height="11" fill="#e9d5cb" opacity="0.90"/>
<rect x="1316" y="335" width="14" height="11" fill="#e9d5cb" opacity="0.90"/>
<rect x="1522" y="343" width="12" height="17" fill="#d9a08a" opacity="0.90"/>
<rect x="511" y="315" width="31" height="18" fill="#e2c0b0" opacity="0.90"/>
<rect x="952" y="336" width="14" height="10" fill="#c9836a" opacity="0.90"/>
<rect x="1548" y="321" width="23" height="12" fill="#c9836a" opacity="0.90"/>
<rect x="535" y="364" width="21" height="18" fill="#e2c0b0" opacity="0.90"/>
<rect x="1235" y="376" width="13" height="15" fill="#e2c0b0" opacity="0.90"/>
<rect x="597" y="322" width="12" height="10" fill="#d8b6a6" opacity="0.90"/>
<rect x="1151" y="292" width="32" height="11" fill="#d9a08a" opacity="0.90"/>
<rect x="1803" y="399" width="29" height="19" fill="#b9796a" opacity="0.90"/>
<rect x="1617" y="331" width="33" height="12" fill="#e9d5cb" opacity="0.90"/>
<rect x="182" y="297" width="30" height="13" fill="#d9a08a" opacity="0.90"/>
<rect x="1651" y="374" width="32" height="16" fill="#d9a08a" opacity="0.90"/>
<rect x="555" y="314" width="25" height="19" fill="#a8806c" opacity="0.90"/>
<rect x="420" y="348" width="18" height="10" fill="#f0e4da" opacity="0.90"/>
<rect x="401" y="360" width="32" height="8" fill="#e9d5cb" opacity="0.90"/>
<rect x="1605" y="289" width="28" height="16" fill="#d8b6a6" opacity="0.90"/>
<rect x="190" y="239" width="28" height="19" fill="#b9796a" opacity="0.90"/>
<rect x="1157" y="324" width="25" height="13" fill="#e2c0b0" opacity="0.90"/>
<rect x="555" y="253" width="21" height="10" fill="#f0e4da" opacity="0.90"/>
<rect x="1551" y="408" width="31" height="13" fill="#f0e4da" opacity="0.90"/>
<rect x="1535" y="302" width="29" height="8" fill="#e2c0b0" opacity="0.90"/>
<rect x="1698" y="306" width="20" height="9" fill="#a8806c" opacity="0.90"/>
<rect x="1614" y="371" width="20" height="12" fill="#f0e4da" opacity="0.90"/>
<rect x="954" y="341" width="13" height="10" fill="#e9d5cb" opacity="0.90"/>
<rect x="416" y="292" width="31" height="13" fill="#c9836a" opacity="0.90"/>
<rect x="572" y="294" width="13" height="11" fill="#b9796a" opacity="0.90"/>
<rect x="695" y="265" width="21" height="11" fill="#d8b6a6" opacity="0.90"/>
<rect x="296" y="361" width="11" height="18" fill="#f0e4da" opacity="0.90"/>
<rect x="1103" y="377" width="12" height="17" fill="#e2c0b0" opacity="0.90"/>
<rect x="872" y="286" width="15" height="10" fill="#a8806c" opacity="0.90"/>
<rect x="613" y="364" width="11" height="16" fill="#b9796a" opacity="0.90"/>
<rect x="351" y="316" width="20" height="14" fill="#c9836a" opacity="0.90"/>
<rect x="891" y="361" width="32" height="11" fill="#e2c0b0" opacity="0.90"/>
<rect x="877" y="378" width="15" height="14" fill="#c9836a" opacity="0.90"/>
<rect x="1616" y="356" width="15" height="10" fill="#d9a08a" opacity="0.90"/>
<rect x="1590" y="407" width="27" height="17" fill="#c9836a" opacity="0.90"/>
<rect x="462" y="317" width="26" height="17" fill="#b9796a" opacity="0.90"/>
<rect x="456" y="240" width="27" height="12" fill="#e9d5cb" opacity="0.90"/>
<rect x="1028" y="305" width="16" height="15" fill="#d8b6a6" opacity="0.90"/>
<rect x="253" y="279" width="28" height="9" fill="#b9796a" opacity="0.90"/>
<rect x="539" y="314" width="33" height="8" fill="#e2c0b0" opacity="0.90"/>
<rect x="1130" y="381" width="18" height="19" fill="#d9a08a" opacity="0.90"/>
<rect x="308" y="324" width="29" height="18" fill="#e2c0b0" opacity="0.90"/>
<rect x="1500" y="399" width="23" height="18" fill="#b9796a" opacity="0.90"/>
<rect x="1669" y="419" width="21" height="14" fill="#c9836a" opacity="0.90"/>
<rect x="127" y="352" width="15" height="10" fill="#d9a08a" opacity="0.90"/>
<rect x="654" y="318" width="32" height="8" fill="#f0e4da" opacity="0.90"/>
<rect x="563" y="353" width="25" height="13" fill="#f0e4da" opacity="0.90"/>
<rect x="1361" y="286" width="30" height="16" fill="#e9d5cb" opacity="0.90"/>
<rect x="584" y="302" width="24" height="17" fill="#d9a08a" opacity="0.90"/>
<rect x="1268" y="457" width="13" height="15" fill="#e6cdc2" opacity="0.90"/>
<rect x="1282" y="470" width="27" height="9" fill="#d9b0a4" opacity="0.90"/>
<rect x="1725" y="456" width="20" height="18" fill="#d9b0a4" opacity="0.90"/>
<rect x="1421" y="500" width="28" height="12" fill="#e6cdc2" opacity="0.90"/>
<rect x="1669" y="482" width="30" height="14" fill="#c08f80" opacity="0.90"/>
<rect x="1656" y="492" width="11" height="14" fill="#c08f80" opacity="0.90"/>
<rect x="1339" y="458" width="25" height="12" fill="#e6cdc2" opacity="0.90"/>
<rect x="1238" y="459" width="22" height="8" fill="#e6cdc2" opacity="0.90"/>
<rect x="1435" y="456" width="33" height="13" fill="#d9b0a4" opacity="0.90"/>
<rect x="1653" y="495" width="31" height="8" fill="#c08f80" opacity="0.90"/>
<rect x="1714" y="474" width="25" height="17" fill="#d9b0a4" opacity="0.90"/>
<rect x="1547" y="445" width="22" height="13" fill="#d9b0a4" opacity="0.90"/>
<rect x="1361" y="449" width="25" height="9" fill="#c08f80" opacity="0.90"/>
<rect x="1247" y="472" width="32" height="13" fill="#e6cdc2" opacity="0.90"/>
<rect x="1695" y="498" width="23" height="11" fill="#d9b0a4" opacity="0.90"/>
<rect x="1614" y="447" width="20" height="16" fill="#e6cdc2" opacity="0.90"/>
<rect x="1564" y="441" width="27" height="13" fill="#c08f80" opacity="0.90"/>
<rect x="1543" y="462" width="17" height="10" fill="#e6cdc2" opacity="0.90"/>
<rect x="1305" y="468" width="33" height="12" fill="#c08f80" opacity="0.90"/>
<rect x="1290" y="501" width="17" height="11" fill="#c08f80" opacity="0.90"/>
<rect x="1359" y="504" width="17" height="17" fill="#e6cdc2" opacity="0.90"/>
<rect x="1508" y="473" width="18" height="15" fill="#b07868" opacity="0.90"/>
<rect x="1667" y="453" width="28" height="14" fill="#e6cdc2" opacity="0.90"/>
<rect x="1433" y="478" width="13" height="10" fill="#c08f80" opacity="0.90"/>
<rect x="1659" y="466" width="27" height="16" fill="#b07868" opacity="0.90"/>
<rect x="1350" y="475" width="25" height="16" fill="#b07868" opacity="0.90"/>
<rect x="1687" y="425" width="28" height="15" fill="#b07868" opacity="0.90"/>
<rect x="1422" y="504" width="13" height="18" fill="#c08f80" opacity="0.90"/>
<rect x="1688" y="473" width="19" height="13" fill="#b07868" opacity="0.90"/>
<rect x="1361" y="453" width="18" height="14" fill="#b07868" opacity="0.90"/>
<rect x="1562" y="425" width="27" height="19" fill="#b07868" opacity="0.90"/>
<rect x="1448" y="439" width="17" height="9" fill="#b07868" opacity="0.90"/>
<rect x="1525" y="432" width="32" height="11" fill="#e6cdc2" opacity="0.90"/>
<rect x="1736" y="441" width="20" height="18" fill="#d9b0a4" opacity="0.90"/>
<rect x="1214" y="445" width="31" height="11" fill="#c08f80" opacity="0.90"/>
<rect x="462" y="617" width="35" height="14" fill="#d98d62" opacity="0.90"/>
<rect x="399" y="603" width="21" height="16" fill="#e6ddd8" opacity="0.90"/>
<rect x="699" y="553" width="35" height="9" fill="#e6ddd8" opacity="0.90"/>
<rect x="440" y="604" width="47" height="9" fill="#f0ebe8" opacity="0.90"/>
<rect x="709" y="542" width="33" height="15" fill="#d98d62" opacity="0.90"/>
<rect x="349" y="616" width="44" height="10" fill="#e6ddd8" opacity="0.90"/>
<rect x="362" y="591" width="29" height="10" fill="#d98d62" opacity="0.90"/>
<rect x="668" y="560" width="44" height="19" fill="#e6ddd8" opacity="0.90"/>
<rect x="516" y="582" width="44" height="10" fill="#f0ebe8" opacity="0.90"/>
<rect x="389" y="585" width="36" height="9" fill="#d98d62" opacity="0.90"/>
<rect x="726" y="546" width="21" height="12" fill="#f0ebe8" opacity="0.90"/>
<rect x="327" y="628" width="20" height="11" fill="#f0ebe8" opacity="0.90"/>
<rect x="489" y="595" width="25" height="13" fill="#d98d62" opacity="0.90"/>
<rect x="478" y="607" width="46" height="14" fill="#f0ebe8" opacity="0.90"/>
<rect x="483" y="583" width="23" height="9" fill="#d98d62" opacity="0.90"/>
<rect x="211" y="622" width="25" height="14" fill="#e6ddd8" opacity="0.90"/>
<rect x="505" y="599" width="21" height="8" fill="#d98d62" opacity="0.90"/>
<rect x="337" y="628" width="30" height="10" fill="#e6ddd8" opacity="0.90"/>
<rect x="514" y="600" width="48" height="8" fill="#f0ebe8" opacity="0.90"/>
<rect x="410" y="597" width="21" height="18" fill="#d98d62" opacity="0.90"/>
<rect x="593" y="543" width="21" height="10" fill="#f0ebe8" opacity="0.90"/>
<rect x="175" y="671" width="45" height="11" fill="#e6ddd8" opacity="0.90"/>
<rect x="953" y="622" width="39" height="13" fill="#f0ebe8" opacity="0.90"/>
<rect x="926" y="603" width="33" height="10" fill="#cf7a50" opacity="0.90"/>
<rect x="995" y="636" width="16" height="18" fill="#f0ebe8" opacity="0.90"/>
<rect x="896" y="596" width="20" height="19" fill="#cf7a50" opacity="0.90"/>
<rect x="994" y="611" width="24" height="18" fill="#cf7a50" opacity="0.90"/>
<rect x="997" y="591" width="18" height="17" fill="#cf7a50" opacity="0.90"/>
<rect x="1063" y="623" width="27" height="12" fill="#e8e0dc" opacity="0.90"/>
<rect x="835" y="608" width="24" height="9" fill="#e0d2cc" opacity="0.90"/>
<rect x="860" y="584" width="36" height="9" fill="#e8e0dc" opacity="0.90"/>
<rect x="1025" y="646" width="21" height="12" fill="#e0d2cc" opacity="0.90"/>
<rect x="1137" y="634" width="39" height="10" fill="#e8e0dc" opacity="0.90"/>
<rect x="1042" y="609" width="26" height="9" fill="#cf7a50" opacity="0.90"/>
<rect x="1082" y="630" width="39" height="14" fill="#e8e0dc" opacity="0.90"/>
<rect x="1087" y="615" width="36" height="9" fill="#f0ebe8" opacity="0.90"/>
<rect x="1058" y="614" width="34" height="12" fill="#e0d2cc" opacity="0.90"/>
<rect x="956" y="607" width="18" height="10" fill="#e0d2cc" opacity="0.90"/>
<rect x="961" y="627" width="18" height="14" fill="#cf7a50" opacity="0.90"/>
<rect x="1174" y="666" width="20" height="16" fill="#f0ebe8" opacity="0.90"/>
<rect x="919" y="583" width="33" height="11" fill="#e8e0dc" opacity="0.90"/>
<rect x="1191" y="648" width="31" height="15" fill="#e0d2cc" opacity="0.90"/>
<rect x="845" y="812" width="29" height="10" fill="#b8bcc4" opacity=".9" transform="rotate(-20 845 812)"/>
<rect x="203" y="1042" width="33" height="8" fill="#e6e6ea" opacity=".9" transform="rotate(-20 203 1042)"/>
<rect x="300" y="1014" width="28" height="10" fill="#f4f2f0" opacity=".9" transform="rotate(-20 300 1014)"/>
<rect x="474" y="947" width="29" height="6" fill="#f4f2f0" opacity=".9" transform="rotate(-20 474 947)"/>
<rect x="581" y="922" width="25" height="7" fill="#efe6de" opacity=".9" transform="rotate(-20 581 922)"/>
<rect x="689" y="869" width="27" height="8" fill="#f4f2f0" opacity=".9" transform="rotate(-20 689 869)"/>
<rect x="267" y="1025" width="32" height="11" fill="#f4f2f0" opacity=".9" transform="rotate(-20 267 1025)"/>
<rect x="886" y="795" width="20" height="10" fill="#7f93b8" opacity=".9" transform="rotate(-20 886 795)"/>
<rect x="708" y="867" width="21" height="10" fill="#d9d3d0" opacity=".9" transform="rotate(-20 708 867)"/>
<rect x="370" y="990" width="22" height="11" fill="#c9c2c0" opacity=".9" transform="rotate(-20 370 990)"/>
<rect x="721" y="868" width="23" height="6" fill="#d9d3d0" opacity=".9" transform="rotate(-20 721 868)"/>
<rect x="488" y="953" width="16" height="10" fill="#f4f2f0" opacity=".9" transform="rotate(-20 488 953)"/>
<rect x="874" y="813" width="17" height="6" fill="#d9d3d0" opacity=".9" transform="rotate(-20 874 813)"/>
<rect x="564" y="903" width="21" height="8" fill="#d9d3d0" opacity=".9" transform="rotate(-20 564 903)"/>
<rect x="628" y="895" width="23" height="8" fill="#d9d3d0" opacity=".9" transform="rotate(-20 628 895)"/>
<rect x="189" y="1039" width="26" height="10" fill="#dcdde2" opacity=".9" transform="rotate(-20 189 1039)"/>
<rect x="806" y="830" width="20" height="10" fill="#c9c2c0" opacity=".9" transform="rotate(-20 806 830)"/>
<rect x="498" y="948" width="17" height="11" fill="#b8bcc4" opacity=".9" transform="rotate(-20 498 948)"/>
<rect x="767" y="837" width="21" height="7" fill="#f4f2f0" opacity=".9" transform="rotate(-20 767 837)"/>
<rect x="819" y="816" width="20" height="11" fill="#dcdde2" opacity=".9" transform="rotate(-20 819 816)"/>
<rect x="412" y="965" width="17" height="6" fill="#f4f2f0" opacity=".9" transform="rotate(-20 412 965)"/>
<rect x="530" y="932" width="28" height="7" fill="#ffffff" opacity=".9" transform="rotate(-20 530 932)"/>
<rect x="258" y="1021" width="17" height="9" fill="#f4f2f0" opacity=".9" transform="rotate(-20 258 1021)"/>
<rect x="427" y="955" width="26" height="10" fill="#ffffff" opacity=".9" transform="rotate(-20 427 955)"/>
<rect x="638" y="892" width="14" height="8" fill="#dcdde2" opacity=".9" transform="rotate(-20 638 892)"/>
<rect x="384" y="979" width="30" height="11" fill="#dcdde2" opacity=".9" transform="rotate(-20 384 979)"/>
<rect x="396" y="990" width="26" height="8" fill="#7f93b8" opacity=".9" transform="rotate(-20 396 990)"/>
<rect x="515" y="963" width="21" height="10" fill="#d9d3d0" opacity=".9" transform="rotate(-20 515 963)"/>
<rect x="353" y="1008" width="32" height="11" fill="#b8bcc4" opacity=".9" transform="rotate(-20 353 1008)"/>
<rect x="876" y="874" width="23" height="6" fill="#ffffff" opacity=".9" transform="rotate(-20 876 874)"/>
<rect x="689" y="911" width="18" height="6" fill="#b8bcc4" opacity=".9" transform="rotate(-20 689 911)"/>
<rect x="370" y="995" width="17" height="10" fill="#f4f2f0" opacity=".9" transform="rotate(-20 370 995)"/>
<rect x="351" y="1013" width="24" height="6" fill="#e6e6ea" opacity=".9" transform="rotate(-20 351 1013)"/>
<rect x="720" y="908" width="20" height="8" fill="#dcdde2" opacity=".9" transform="rotate(-20 720 908)"/>
<rect x="853" y="869" width="22" height="9" fill="#7f93b8" opacity=".9" transform="rotate(-20 853 869)"/>
<rect x="663" y="925" width="24" height="8" fill="#c9c2c0" opacity=".9" transform="rotate(-20 663 925)"/>
<rect x="876" y="885" width="33" height="9" fill="#f4f2f0" opacity=".9" transform="rotate(-20 876 885)"/>
<rect x="751" y="905" width="25" height="8" fill="#7f93b8" opacity=".9" transform="rotate(-20 751 905)"/>
<rect x="617" y="933" width="20" height="11" fill="#f4f2f0" opacity=".9" transform="rotate(-20 617 933)"/>
<rect x="822" y="888" width="27" height="6" fill="#7f93b8" opacity=".9" transform="rotate(-20 822 888)"/>
<rect x="669" y="923" width="18" height="8" fill="#ffffff" opacity=".9" transform="rotate(-20 669 923)"/>
<rect x="388" y="1002" width="24" height="6" fill="#ffffff" opacity=".9" transform="rotate(-20 388 1002)"/>
<rect x="704" y="916" width="28" height="7" fill="#efe6de" opacity=".9" transform="rotate(-20 704 916)"/>
<rect x="465" y="966" width="24" height="9" fill="#e6e6ea" opacity=".9" transform="rotate(-20 465 966)"/>
<rect x="837" y="889" width="16" height="9" fill="#c9c2c0" opacity=".9" transform="rotate(-20 837 889)"/>
<rect x="758" y="893" width="33" height="10" fill="#e6e6ea" opacity=".9" transform="rotate(-20 758 893)"/>
<rect x="606" y="942" width="33" height="7" fill="#efe6de" opacity=".9" transform="rotate(-20 606 942)"/>
<rect x="777" y="900" width="15" height="7" fill="#7f93b8" opacity=".9" transform="rotate(-20 777 900)"/>
<rect x="360" y="1014" width="23" height="6" fill="#dcdde2" opacity=".9" transform="rotate(-20 360 1014)"/>
<rect x="592" y="949" width="31" height="9" fill="#7f93b8" opacity=".9" transform="rotate(-20 592 949)"/>
<rect x="654" y="986" width="29" height="10" fill="#ffffff" opacity=".9" transform="rotate(-20 654 986)"/>
<rect x="620" y="1000" width="32" height="10" fill="#f4f2f0" opacity=".9" transform="rotate(-20 620 1000)"/>
<rect x="980" y="908" width="20" height="9" fill="#f4f2f0" opacity=".9" transform="rotate(-20 980 908)"/>
<rect x="1046" y="893" width="17" height="8" fill="#efe6de" opacity=".9" transform="rotate(-20 1046 893)"/>
<rect x="605" y="987" width="30" height="7" fill="#c9c2c0" opacity=".9" transform="rotate(-20 605 987)"/>
<rect x="1054" y="902" width="30" height="9" fill="#ffffff" opacity=".9" transform="rotate(-20 1054 902)"/>
<rect x="845" y="952" width="32" height="6" fill="#7f93b8" opacity=".9" transform="rotate(-20 845 952)"/>
<rect x="1076" y="890" width="14" height="11" fill="#e6e6ea" opacity=".9" transform="rotate(-20 1076 890)"/>
<rect x="663" y="992" width="21" height="8" fill="#dcdde2" opacity=".9" transform="rotate(-20 663 992)"/>
<rect x="918" y="920" width="33" height="9" fill="#7f93b8" opacity=".9" transform="rotate(-20 918 920)"/>
<rect x="723" y="979" width="25" height="6" fill="#dcdde2" opacity=".9" transform="rotate(-20 723 979)"/>
<rect x="992" y="907" width="23" height="11" fill="#7f93b8" opacity=".9" transform="rotate(-20 992 907)"/>
<rect x="565" y="1005" width="14" height="8" fill="#f4f2f0" opacity=".9" transform="rotate(-20 565 1005)"/>
<rect x="894" y="925" width="21" height="6" fill="#ffffff" opacity=".9" transform="rotate(-20 894 925)"/>
<rect x="747" y="969" width="16" height="10" fill="#c9c2c0" opacity=".9" transform="rotate(-20 747 969)"/>
<rect x="1018" y="894" width="22" height="9" fill="#e6e6ea" opacity=".9" transform="rotate(-20 1018 894)"/>
<rect x="742" y="973" width="31" height="11" fill="#e6e6ea" opacity=".9" transform="rotate(-20 742 973)"/>
<rect x="725" y="979" width="24" height="9" fill="#7f93b8" opacity=".9" transform="rotate(-20 725 979)"/>
<rect x="1019" y="901" width="28" height="10" fill="#efe6de" opacity=".9" transform="rotate(-20 1019 901)"/>
<rect x="832" y="956" width="33" height="6" fill="#d9d3d0" opacity=".9" transform="rotate(-20 832 956)"/>
<rect x="574" y="1008" width="22" height="9" fill="#ffffff" opacity=".9" transform="rotate(-20 574 1008)"/>
<rect x="1045" y="889" width="28" height="7" fill="#c9c2c0" opacity=".9" transform="rotate(-20 1045 889)"/>
<rect x="1025" y="957" width="17" height="11" fill="#dcdde2" opacity=".9" transform="rotate(-20 1025 957)"/>
<rect x="813" y="1005" width="33" height="10" fill="#e6e6ea" opacity=".9" transform="rotate(-20 813 1005)"/>
<rect x="1106" y="939" width="31" height="9" fill="#dcdde2" opacity=".9" transform="rotate(-20 1106 939)"/>
<rect x="987" y="959" width="14" height="8" fill="#ffffff" opacity=".9" transform="rotate(-20 987 959)"/>
<rect x="1129" y="937" width="28" height="11" fill="#f4f2f0" opacity=".9" transform="rotate(-20 1129 937)"/>
<rect x="702" y="1040" width="20" height="6" fill="#d9d3d0" opacity=".9" transform="rotate(-20 702 1040)"/>
<rect x="802" y="998" width="20" height="6" fill="#7f93b8" opacity=".9" transform="rotate(-20 802 998)"/>
<rect x="836" y="1007" width="22" height="10" fill="#7f93b8" opacity=".9" transform="rotate(-20 836 1007)"/>
<rect x="756" y="1027" width="15" height="9" fill="#efe6de" opacity=".9" transform="rotate(-20 756 1027)"/>
<rect x="1190" y="941" width="31" height="6" fill="#7f93b8" opacity=".9" transform="rotate(-20 1190 941)"/>
<rect x="973" y="967" width="26" height="10" fill="#7f93b8" opacity=".9" transform="rotate(-20 973 967)"/>
<rect x="722" y="1015" width="24" height="11" fill="#7f93b8" opacity=".9" transform="rotate(-20 722 1015)"/>
<rect x="1095" y="951" width="25" height="9" fill="#7f93b8" opacity=".9" transform="rotate(-20 1095 951)"/>
<rect x="779" y="1022" width="23" height="6" fill="#ffffff" opacity=".9" transform="rotate(-20 779 1022)"/>
<rect x="1009" y="973" width="25" height="8" fill="#c9c2c0" opacity=".9" transform="rotate(-20 1009 973)"/>
<rect x="1157" y="924" width="23" height="9" fill="#7f93b8" opacity=".9" transform="rotate(-20 1157 924)"/>
<rect x="736" y="1021" width="33" height="11" fill="#dcdde2" opacity=".9" transform="rotate(-20 736 1021)"/>
<rect x="718" y="1019" width="29" height="7" fill="#7f93b8" opacity=".9" transform="rotate(-20 718 1019)"/>
<rect x="1066" y="967" width="31" height="10" fill="#c9c2c0" opacity=".9" transform="rotate(-20 1066 967)"/>
<rect x="673" y="1030" width="33" height="8" fill="#7f93b8" opacity=".9" transform="rotate(-20 673 1030)"/>
<rect x="1142" y="933" width="29" height="6" fill="#f4f2f0" opacity=".9" transform="rotate(-20 1142 933)"/>
<rect x="690" y="1030" width="31" height="6" fill="#b8bcc4" opacity=".9" transform="rotate(-20 690 1030)"/>
<rect x="887" y="1005" width="26" height="7" fill="#ffffff" opacity=".9" transform="rotate(-20 887 1005)"/>
<rect x="667" y="1031" width="21" height="7" fill="#b8bcc4" opacity=".9" transform="rotate(-20 667 1031)"/>
<rect x="1082" y="1007" width="18" height="9" fill="#dcdde2" opacity=".9" transform="rotate(-20 1082 1007)"/>
<rect x="1038" y="1018" width="33" height="6" fill="#ffffff" opacity=".9" transform="rotate(-20 1038 1018)"/>
<rect x="949" y="1031" width="31" height="6" fill="#efe6de" opacity=".9" transform="rotate(-20 949 1031)"/>
<rect x="915" y="1045" width="31" height="10" fill="#f4f2f0" opacity=".9" transform="rotate(-20 915 1045)"/>
<rect x="1148" y="974" width="31" height="11" fill="#ffffff" opacity=".9" transform="rotate(-20 1148 974)"/>
<rect x="1112" y="983" width="32" height="6" fill="#ffffff" opacity=".9" transform="rotate(-20 1112 983)"/>
<rect x="912" y="1035" width="17" height="10" fill="#e6e6ea" opacity=".9" transform="rotate(-20 912 1035)"/>
<rect x="1007" y="1022" width="21" height="8" fill="#f4f2f0" opacity=".9" transform="rotate(-20 1007 1022)"/>
<rect x="1058" y="1004" width="14" height="6" fill="#d9d3d0" opacity=".9" transform="rotate(-20 1058 1004)"/>
<rect x="1068" y="1007" width="14" height="11" fill="#e6e6ea" opacity=".9" transform="rotate(-20 1068 1007)"/>
<rect x="1164" y="971" width="16" height="8" fill="#dcdde2" opacity=".9" transform="rotate(-20 1164 971)"/>
<rect x="933" y="1040" width="24" height="11" fill="#c9c2c0" opacity=".9" transform="rotate(-20 933 1040)"/>
<rect x="980" y="1034" width="20" height="7" fill="#d9d3d0" opacity=".9" transform="rotate(-20 980 1034)"/>
<rect x="1114" y="979" width="19" height="6" fill="#f4f2f0" opacity=".9" transform="rotate(-20 1114 979)"/>
<rect x="910" y="1047" width="33" height="7" fill="#7f93b8" opacity=".9" transform="rotate(-20 910 1047)"/>
<rect x="1108" y="992" width="24" height="10" fill="#ffffff" opacity=".9" transform="rotate(-20 1108 992)"/>
<rect x="992" y="1018" width="33" height="8" fill="#b8bcc4" opacity=".9" transform="rotate(-20 992 1018)"/>
<rect x="1184" y="981" width="26" height="7" fill="#c9c2c0" opacity=".9" transform="rotate(-20 1184 981)"/>
<rect x="1171" y="804" width="21" height="7" fill="#d9d3d0" opacity=".9" transform="rotate(-20 1171 804)"/>
<rect x="1087" y="812" width="14" height="10" fill="#b8bcc4" opacity=".9" transform="rotate(-20 1087 812)"/>
<rect x="1103" y="812" width="24" height="7" fill="#f4f2f0" opacity=".9" transform="rotate(-20 1103 812)"/>
<rect x="1046" y="815" width="20" height="9" fill="#b8bcc4" opacity=".9" transform="rotate(-20 1046 815)"/>
<rect x="973" y="828" width="21" height="10" fill="#b8bcc4" opacity=".9" transform="rotate(-20 973 828)"/>
<rect x="1186" y="804" width="30" height="6" fill="#c9c2c0" opacity=".9" transform="rotate(-20 1186 804)"/>
<rect x="1111" y="816" width="19" height="11" fill="#7f93b8" opacity=".9" transform="rotate(-20 1111 816)"/>
<rect x="1055" y="807" width="16" height="11" fill="#c9c2c0" opacity=".9" transform="rotate(-20 1055 807)"/>
<rect x="1000" y="811" width="21" height="10" fill="#dcdde2" opacity=".9" transform="rotate(-20 1000 811)"/>
<rect x="1145" y="808" width="30" height="11" fill="#f4f2f0" opacity=".9" transform="rotate(-20 1145 808)"/>
<rect x="992" y="829" width="22" height="8" fill="#ffffff" opacity=".9" transform="rotate(-20 992 829)"/>
<rect x="1008" y="822" width="24" height="7" fill="#e6e6ea" opacity=".9" transform="rotate(-20 1008 822)"/>
<rect x="976" y="820" width="16" height="9" fill="#dcdde2" opacity=".9" transform="rotate(-20 976 820)"/>
<rect x="1117" y="811" width="21" height="9" fill="#d9d3d0" opacity=".9" transform="rotate(-20 1117 811)"/>
<rect x="1510" y="773" width="19" height="9" fill="#f4f2f0" opacity=".9" transform="rotate(-20 1510 773)"/>
<rect x="1474" y="757" width="28" height="7" fill="#7f93b8" opacity=".9" transform="rotate(-20 1474 757)"/>
<rect x="1338" y="761" width="24" height="8" fill="#e6e6ea" opacity=".9" transform="rotate(-20 1338 761)"/>
<rect x="1318" y="769" width="26" height="8" fill="#f4f2f0" opacity=".9" transform="rotate(-20 1318 769)"/>
<rect x="1549" y="756" width="29" height="11" fill="#b8bcc4" opacity=".9" transform="rotate(-20 1549 756)"/>
<rect x="1530" y="762" width="21" height="9" fill="#d9d3d0" opacity=".9" transform="rotate(-20 1530 762)"/>
<rect x="1679" y="771" width="15" height="7" fill="#e6e6ea" opacity=".9" transform="rotate(-20 1679 771)"/>
<rect x="1264" y="758" width="22" height="11" fill="#f4f2f0" opacity=".9" transform="rotate(-20 1264 758)"/>
<rect x="1280" y="771" width="28" height="8" fill="#efe6de" opacity=".9" transform="rotate(-20 1280 771)"/>
<rect x="1297" y="759" width="16" height="10" fill="#f4f2f0" opacity=".9" transform="rotate(-20 1297 759)"/>
<rect x="1538" y="764" width="14" height="10" fill="#c9c2c0" opacity=".9" transform="rotate(-20 1538 764)"/>
<rect x="1375" y="762" width="15" height="11" fill="#f4f2f0" opacity=".9" transform="rotate(-20 1375 762)"/>
<rect x="1264" y="767" width="25" height="6" fill="#d9d3d0" opacity=".9" transform="rotate(-20 1264 767)"/>
<rect x="1549" y="756" width="27" height="8" fill="#dcdde2" opacity=".9" transform="rotate(-20 1549 756)"/>
<rect x="1688" y="778" width="16" height="8" fill="#c9c2c0" opacity=".9" transform="rotate(-20 1688 778)"/>
<rect x="1663" y="770" width="24" height="6" fill="#b8bcc4" opacity=".9" transform="rotate(-20 1663 770)"/>
<rect x="1354" y="763" width="24" height="8" fill="#f4f2f0" opacity=".9" transform="rotate(-20 1354 763)"/>
<rect x="1361" y="760" width="22" height="9" fill="#ffffff" opacity=".9" transform="rotate(-20 1361 760)"/>
<rect x="1308" y="762" width="21" height="8" fill="#efe6de" opacity=".9" transform="rotate(-20 1308 762)"/>
<rect x="1539" y="777" width="20" height="8" fill="#c9c2c0" opacity=".9" transform="rotate(-20 1539 777)"/>
<rect x="1535" y="754" width="15" height="11" fill="#7f93b8" opacity=".9" transform="rotate(-20 1535 754)"/>
<rect x="1238" y="758" width="18" height="7" fill="#efe6de" opacity=".9" transform="rotate(-20 1238 758)"/>
<rect x="1419" y="756" width="18" height="7" fill="#e6e6ea" opacity=".9" transform="rotate(-20 1419 756)"/>
<rect x="1262" y="750" width="25" height="7" fill="#c9c2c0" opacity=".9" transform="rotate(-20 1262 750)"/>
<rect x="1552" y="760" width="28" height="10" fill="#d9d3d0" opacity=".9" transform="rotate(-20 1552 760)"/>
<rect x="1460" y="772" width="28" height="9" fill="#efe6de" opacity=".9" transform="rotate(-20 1460 772)"/>
<rect x="1527" y="818" width="22" height="9" fill="#ffffff" opacity=".9" transform="rotate(-20 1527 818)"/>
<rect x="1639" y="854" width="31" height="11" fill="#dcdde2" opacity=".9" transform="rotate(-20 1639 854)"/>
<rect x="1517" y="798" width="18" height="9" fill="#7f93b8" opacity=".9" transform="rotate(-20 1517 798)"/>
<rect x="1647" y="851" width="19" height="9" fill="#d9d3d0" opacity=".9" transform="rotate(-20 1647 851)"/>
<rect x="1538" y="823" width="21" height="6" fill="#b8bcc4" opacity=".9" transform="rotate(-20 1538 823)"/>
<rect x="1525" y="816" width="27" height="7" fill="#dcdde2" opacity=".9" transform="rotate(-20 1525 816)"/>
<rect x="1643" y="862" width="16" height="10" fill="#e6e6ea" opacity=".9" transform="rotate(-20 1643 862)"/>
<rect x="1623" y="856" width="24" height="6" fill="#efe6de" opacity=".9" transform="rotate(-20 1623 856)"/>
<rect x="1576" y="827" width="32" height="6" fill="#efe6de" opacity=".9" transform="rotate(-20 1576 827)"/>
<rect x="1550" y="824" width="29" height="7" fill="#efe6de" opacity=".9" transform="rotate(-20 1550 824)"/>
<rect x="1565" y="829" width="18" height="11" fill="#f4f2f0" opacity=".9" transform="rotate(-20 1565 829)"/>
<rect x="1604" y="834" width="17" height="6" fill="#ffffff" opacity=".9" transform="rotate(-20 1604 834)"/>
<rect x="1505" y="802" width="18" height="10" fill="#dcdde2" opacity=".9" transform="rotate(-20 1505 802)"/>
<rect x="1531" y="816" width="28" height="8" fill="#c9c2c0" opacity=".9" transform="rotate(-20 1531 816)"/>
<rect x="1513" y="806" width="14" height="6" fill="#e6e6ea" opacity=".9" transform="rotate(-20 1513 806)"/>
<rect x="1588" y="831" width="30" height="6" fill="#dcdde2" opacity=".9" transform="rotate(-20 1588 831)"/>
<rect x="1576" y="818" width="14" height="9" fill="#efe6de" opacity=".9" transform="rotate(-20 1576 818)"/>
<rect x="1553" y="814" width="18" height="6" fill="#ffffff" opacity=".9" transform="rotate(-20 1553 814)"/>
<rect x="1596" y="842" width="17" height="9" fill="#c9c2c0" opacity=".9" transform="rotate(-20 1596 842)"/>
<rect x="1563" y="815" width="25" height="11" fill="#d9d3d0" opacity=".9" transform="rotate(-20 1563 815)"/>
<rect x="1646" y="851" width="15" height="6" fill="#f4f2f0" opacity=".9" transform="rotate(-20 1646 851)"/>
<rect x="1605" y="840" width="27" height="7" fill="#dcdde2" opacity=".9" transform="rotate(-20 1605 840)"/>
<rect x="1184" y="1050" width="21" height="9" fill="#ffffff" opacity=".9" transform="rotate(-20 1184 1050)"/>
<rect x="1293" y="1015" width="18" height="7" fill="#c9c2c0" opacity=".9" transform="rotate(-20 1293 1015)"/>
<rect x="1329" y="988" width="25" height="11" fill="#f4f2f0" opacity=".9" transform="rotate(-20 1329 988)"/>
<rect x="1215" y="1046" width="20" height="6" fill="#efe6de" opacity=".9" transform="rotate(-20 1215 1046)"/>
<rect x="1300" y="1004" width="32" height="10" fill="#f4f2f0" opacity=".9" transform="rotate(-20 1300 1004)"/>
<rect x="1166" y="1075" width="27" height="6" fill="#7f93b8" opacity=".9" transform="rotate(-20 1166 1075)"/>
<rect x="1349" y="997" width="27" height="10" fill="#e6e6ea" opacity=".9" transform="rotate(-20 1349 997)"/>
<rect x="1427" y="959" width="23" height="10" fill="#e6e6ea" opacity=".9" transform="rotate(-20 1427 959)"/>
<rect x="1356" y="982" width="26" height="11" fill="#b8bcc4" opacity=".9" transform="rotate(-20 1356 982)"/>
<rect x="1181" y="1065" width="17" height="11" fill="#efe6de" opacity=".9" transform="rotate(-20 1181 1065)"/>
<rect x="1195" y="1074" width="32" height="10" fill="#dcdde2" opacity=".9" transform="rotate(-20 1195 1074)"/>
<rect x="1276" y="1034" width="31" height="7" fill="#c9c2c0" opacity=".9" transform="rotate(-20 1276 1034)"/>
<rect x="541" y="888" width="29" height="10" fill="#d9d3d0" opacity=".9" transform="rotate(-20 541 888)"/>
<rect x="345" y="970" width="31" height="9" fill="#f4f2f0" opacity=".9" transform="rotate(-20 345 970)"/>
<rect x="422" y="950" width="27" height="11" fill="#b8bcc4" opacity=".9" transform="rotate(-20 422 950)"/>
<rect x="409" y="944" width="30" height="8" fill="#b8bcc4" opacity=".9" transform="rotate(-20 409 944)"/>
<rect x="588" y="874" width="14" height="6" fill="#efe6de" opacity=".9" transform="rotate(-20 588 874)"/>
<rect x="429" y="937" width="20" height="7" fill="#7f93b8" opacity=".9" transform="rotate(-20 429 937)"/>
<rect x="414" y="931" width="20" height="11" fill="#dcdde2" opacity=".9" transform="rotate(-20 414 931)"/>
<rect x="557" y="894" width="30" height="6" fill="#f4f2f0" opacity=".9" transform="rotate(-20 557 894)"/>
<rect x="417" y="943" width="20" height="6" fill="#dcdde2" opacity=".9" transform="rotate(-20 417 943)"/>
<rect x="346" y="974" width="31" height="8" fill="#efe6de" opacity=".9" transform="rotate(-20 346 974)"/>
<rect x="390" y="962" width="26" height="11" fill="#dcdde2" opacity=".9" transform="rotate(-20 390 962)"/>
<rect x="399" y="952" width="16" height="7" fill="#ffffff" opacity=".9" transform="rotate(-20 399 952)"/>
<rect x="581" y="896" width="28" height="10" fill="#b8bcc4" opacity=".9" transform="rotate(-20 581 896)"/>
<rect x="300" y="981" width="22" height="9" fill="#7f93b8" opacity=".9" transform="rotate(-20 300 981)"/>
<rect x="451" y="931" width="27" height="9" fill="#b8bcc4" opacity=".9" transform="rotate(-20 451 931)"/>
<rect x="679" y="840" width="27" height="8" fill="#f4f2f0" opacity=".9" transform="rotate(-20 679 840)"/>
<rect x="266" y="1004" width="25" height="8" fill="#c9c2c0" opacity=".9" transform="rotate(-20 266 1004)"/>
<rect x="655" y="864" width="14" height="7" fill="#dcdde2" opacity=".9" transform="rotate(-20 655 864)"/>
<rect x="245" y="1003" width="17" height="11" fill="#c9c2c0" opacity=".9" transform="rotate(-20 245 1003)"/>
<rect x="248" y="1008" width="26" height="7" fill="#d9d3d0" opacity=".9" transform="rotate(-20 248 1008)"/>
<rect x="384" y="1092" width="39" height="27" fill="#e9a36a" opacity="0.90"/>
<rect x="175" y="1106" width="47" height="20" fill="#e9a36a" opacity="0.90"/>
<rect x="453" y="1117" width="35" height="25" fill="#e8d8c8" opacity="0.90"/>
<rect x="924" y="1134" width="36" height="15" fill="#9a4c3e" opacity="0.90"/>
<rect x="905" y="1089" width="35" height="21" fill="#e9a36a" opacity="0.90"/>
<rect x="405" y="1063" width="34" height="19" fill="#c25a3a" opacity="0.90"/>
<rect x="1061" y="1104" width="35" height="27" fill="#d8703f" opacity="0.90"/>
<rect x="716" y="1132" width="38" height="23" fill="#c25a3a" opacity="0.90"/>
<rect x="487" y="1088" width="58" height="17" fill="#d8703f" opacity="0.90"/>
<rect x="1025" y="1129" width="42" height="19" fill="#d8703f" opacity="0.90"/>
<rect x="876" y="1103" width="29" height="24" fill="#e8d8c8" opacity="0.90"/>
<rect x="757" y="1129" width="38" height="15" fill="#e8d8c8" opacity="0.90"/>
<rect x="456" y="1118" width="43" height="18" fill="#e9a36a" opacity="0.90"/>
<rect x="212" y="1078" width="24" height="21" fill="#e9a36a" opacity="0.90"/>
<rect x="662" y="1094" width="57" height="17" fill="#d8703f" opacity="0.90"/>
<rect x="984" y="1142" width="27" height="22" fill="#e8d8c8" opacity="0.90"/>
<rect x="932" y="1129" width="57" height="16" fill="#d8703f" opacity="0.90"/>
<rect x="1066" y="1131" width="48" height="24" fill="#e8d8c8" opacity="0.90"/>
<rect x="940" y="1134" width="54" height="19" fill="#e8d8c8" opacity="0.90"/>
<rect x="903" y="1106" width="30" height="26" fill="#9a4c3e" opacity="0.90"/>
<rect x="833" y="1106" width="57" height="18" fill="#d8703f" opacity="0.90"/>
<rect x="432" y="1066" width="38" height="21" fill="#9a4c3e" opacity="0.90"/>
<rect x="764" y="1113" width="38" height="22" fill="#c25a3a" opacity="0.90"/>
<rect x="883" y="1125" width="54" height="15" fill="#d8703f" opacity="0.90"/>
<rect x="768" y="1124" width="42" height="26" fill="#f0e9e2" opacity="0.90"/>
<rect x="840" y="1131" width="47" height="26" fill="#d8703f" opacity="0.90"/>
<rect x="300" y="1271" width="6" height="7" fill="#d08a7a" opacity="0.90"/>
<rect x="342" y="1252" width="7" height="6" fill="#8aa0b0" opacity="0.90"/>
<rect x="185" y="1284" width="7" height="7" fill="#d08a7a" opacity="0.90"/>
<rect x="202" y="1290" width="5" height="7" fill="#f4f4f4" opacity="0.90"/>
<rect x="154" y="1295" width="8" height="5" fill="#d08a7a" opacity="0.90"/>
<rect x="412" y="1234" width="7" height="4" fill="#c9a080" opacity="0.90"/>
<rect x="117" y="1297" width="8" height="5" fill="#f4f4f4" opacity="0.90"/>
<rect x="260" y="1261" width="7" height="7" fill="#f4f4f4" opacity="0.90"/>
<rect x="365" y="1252" width="7" height="4" fill="#8aa0b0" opacity="0.90"/>
<rect x="89" y="1312" width="7" height="4" fill="#f4f4f4" opacity="0.90"/>
<rect x="326" y="1255" width="7" height="6" fill="#c9a080" opacity="0.90"/>
<rect x="156" y="1306" width="9" height="7" fill="#f4f4f4" opacity="0.90"/>
<rect x="303" y="1251" width="8" height="6" fill="#c9a080" opacity="0.90"/>
<rect x="234" y="1281" width="8" height="5" fill="#f4f4f4" opacity="0.90"/>
<rect x="289" y="1251" width="5" height="7" fill="#d08a7a" opacity="0.90"/>
<rect x="330" y="1252" width="7" height="4" fill="#8aa0b0" opacity="0.90"/>
<rect x="342" y="1240" width="8" height="7" fill="#f4f4f4" opacity="0.90"/>
<rect x="334" y="1264" width="9" height="6" fill="#d08a7a" opacity="0.90"/>
<rect x="101" y="1300" width="5" height="7" fill="#f4f4f4" opacity="0.90"/>
<rect x="269" y="1271" width="7" height="5" fill="#f4f4f4" opacity="0.90"/>
<path d="M1860 1090 1940 1100 1950 1150 1900 1165 1860 1130z" fill="#e9e9ec"/>
<path d="M1380 1010 1440 1020 1430 1080 1380 1085z" fill="#f2ece4"/>
<path d="M1700 1100 1500 1200M1720 1100 1850 1260" stroke="#7d8890" stroke-width="5" fill="none" opacity=".6"/>
</g>
</g></svg>
<aside class="card" style="left:2183px;top:135px;width:659px;height:1382px"></aside>
<h2 class="t" style="left:2221.2px;top:180.3px;font-size:36px;color:#111;-webkit-text-stroke:1.05px #111;transform:scaleX(0.9176);">Live Stream</h2>
<div class="hl" style="left:2184px;top:257px;width:657px"></div>
<div class="abs" style="left:2184px;top:260px;width:657px;height:1256px;overflow:hidden"><div class="abs" style="left:-2184px;top:-260px">
<svg class="ic" style="left:2220.2px;top:283.0px;width:70.0px;height:70.0px"><use href="#a-ein"/></svg>
<div class="bd" style="left:2264.3px;top:326.7px;width:27px;height:27px"></div>
<svg class="ic" style="left:2266.3px;top:328.7px;width:23.0px;height:23.0px"><use href="#i-tw"/></svg>
<div class="t" style="left:2302.5px;top:286.0px;font-size:28px;color:#111;-webkit-text-stroke:0.3px #111;transform:scaleX(0.9933);">@EinhardKlein started following you</div>
<div class="t" style="left:2300.9px;top:330.0px;font-size:24.5px;color:#8a8a8a;-webkit-text-stroke:0.3px #8a8a8a;transform:scaleX(1.0370);">16 Mar 2021 11:13 AM</div>
<svg class="ic" style="left:2221.7px;top:404.0px;width:67.0px;height:67.0px"><use href="#a-man"/></svg>
<div class="bd" style="left:2264.3px;top:446.2px;width:27px;height:27px"></div>
<svg class="ic" style="left:2266.3px;top:448.2px;width:23.0px;height:23.0px"><use href="#i-fb"/></svg>
<div class="t" style="left:2302.5px;top:409.0px;font-size:28px;color:#111;-webkit-text-stroke:0.3px #111;transform:scaleX(0.9799);">Manish Patel liked your post</div>
<div class="t" style="left:2300.9px;top:452.0px;font-size:24.5px;color:#8a8a8a;-webkit-text-stroke:0.3px #8a8a8a;transform:scaleX(1.0370);">16 Mar 2021 11:13 AM</div>
<svg class="ic" style="left:2221.7px;top:525.5px;width:67.0px;height:67.0px"><use href="#a-nat"/></svg>
<div class="bd" style="left:2264.3px;top:567.7px;width:27px;height:27px"></div>
<svg class="ic" style="left:2266.3px;top:569.7px;width:23.0px;height:23.0px"><use href="#i-fb"/></svg>
<div class="t" style="left:2302.5px;top:529.5px;font-size:28px;color:#111;-webkit-text-stroke:0.3px #111;transform:scaleX(0.9839);">Nathan Brooks liked your post</div>
<div class="t" style="left:2300.9px;top:574.0px;font-size:24.5px;color:#8a8a8a;-webkit-text-stroke:0.3px #8a8a8a;transform:scaleX(1.0370);">16 Mar 2021 11:12 AM</div>
<svg class="ic" style="left:2221.4px;top:646.6px;width:67.5px;height:67.5px"><use href="#a-sof"/></svg>
<div class="bd" style="left:2264.3px;top:689.1px;width:27px;height:27px"></div>
<svg class="ic" style="left:2266.3px;top:691.1px;width:23.0px;height:23.0px"><use href="#i-fb"/></svg>
<div class="t" style="left:2305.0px;top:651.0px;font-size:28px;color:#111;-webkit-text-stroke:0.3px #111;transform:scaleX(0.9578);">Sofia Lopz liked your post</div>
<div class="t" style="left:2300.9px;top:696.0px;font-size:24.5px;color:#8a8a8a;-webkit-text-stroke:0.3px #8a8a8a;transform:scaleX(1.0370);">16 Mar 2021 11:12 AM</div>
<svg class="ic" style="left:2221.7px;top:768.9px;width:67.0px;height:67.0px"><use href="#a-and"/></svg>
<div class="bd" style="left:2264.3px;top:811.1px;width:27px;height:27px"></div>
<svg class="ic" style="left:2266.3px;top:813.1px;width:23.0px;height:23.0px"><use href="#i-fb"/></svg>
<div class="t" style="left:2303.5px;top:771.0px;font-size:28px;color:#111;-webkit-text-stroke:0.3px #111;transform:scaleX(0.9767);">Andrea liked commented on your post</div>
<div class="t" style="left:2300.9px;top:815.5px;font-size:24.5px;color:#8a8a8a;-webkit-text-stroke:0.3px #8a8a8a;transform:scaleX(1.0370);">16 Mar 2021 11:12 AM</div>
<svg class="ic" style="left:2221.7px;top:889.5px;width:67.0px;height:67.0px"><use href="#a-and"/></svg>
<div class="bd" style="left:2264.3px;top:931.7px;width:27px;height:27px"></div>
<svg class="ic" style="left:2266.3px;top:933.7px;width:23.0px;height:23.0px"><use href="#i-fb"/></svg>
<div class="t" style="left:2301.5px;top:891.0px;font-size:28px;color:#111;-webkit-text-stroke:0.3px #111;transform:scaleX(0.9803);">Andrea liked your post</div>
<div class="t" style="left:2300.9px;top:937.0px;font-size:24.5px;color:#8a8a8a;-webkit-text-stroke:0.3px #8a8a8a;transform:scaleX(1.0456);">16 Mar 2021 11:11 AM</div>
<svg class="ic" style="left:2221.7px;top:1010.5px;width:67.0px;height:67.0px"><use href="#a-man"/></svg>
<div class="bd" style="left:2264.3px;top:1052.7px;width:27px;height:27px"></div>
<svg class="ic" style="left:2266.3px;top:1054.7px;width:23.0px;height:23.0px"><use href="#i-fb"/></svg>
<div class="t" style="left:2302.5px;top:1014.0px;font-size:28px;color:#111;-webkit-text-stroke:0.3px #111;transform:scaleX(0.9799);">Manish Patel liked your post</div>
<div class="t" style="left:2301.0px;top:1058.5px;font-size:24.5px;color:#8a8a8a;-webkit-text-stroke:0.3px #8a8a8a;transform:scaleX(1.0183);">15 Mar 2021 03:27 PM</div>
<svg class="ic" style="left:2221.4px;top:1130.8px;width:67.5px;height:67.5px"><use href="#a-cha"/></svg>
<div class="bd" style="left:2264.3px;top:1173.3px;width:27px;height:27px"></div>
<svg class="ic" style="left:2266.3px;top:1175.3px;width:23.0px;height:23.0px"><use href="#i-tw"/></svg>
<div class="t" style="left:2302.5px;top:1133.0px;font-size:28px;color:#111;-webkit-text-stroke:0.3px #111;transform:scaleX(0.9923);">@Charles retweeted your tweet</div>
<div class="t" style="left:2301.0px;top:1178.5px;font-size:24.5px;color:#8a8a8a;-webkit-text-stroke:0.3px #8a8a8a;transform:scaleX(1.0183);">14 Mar 2021 07:49 PM</div>
<div class="tag" style="left:2564.500px;top:1175.0px;width:82px"></div>
<div class="t" style="left:2575.1px;top:1181.0px;font-size:18.5px;color:#ee7a28;-webkit-text-stroke:0.45px #ee7a28;transform:scaleX(0.9365);">Contact</div>
<svg class="ic" style="left:2220.2px;top:1253.0px;width:70.0px;height:70.0px"><use href="#a-ein"/></svg>
<div class="bd" style="left:2264.3px;top:1296.7px;width:27px;height:27px"></div>
<svg class="ic" style="left:2266.3px;top:1298.7px;width:23.0px;height:23.0px"><use href="#i-tw"/></svg>
<div class="t" style="left:2302.5px;top:1257.0px;font-size:28px;color:#111;-webkit-text-stroke:0.3px #111;transform:scaleX(0.9881);">@Manish Patel  retweeted your tweet</div>
<div class="t" style="left:2300.9px;top:1300.5px;font-size:24.5px;color:#8a8a8a;-webkit-text-stroke:0.3px #8a8a8a;transform:scaleX(1.0266);">11 Mar 2021 12:42 PM</div>
<div class="tag" style="left:2564.500px;top:1297.0px;width:58px"></div>
<div class="t" style="left:2575.1px;top:1303.0px;font-size:18.5px;color:#ee7a28;-webkit-text-stroke:0.45px #ee7a28;transform:scaleX(0.8846);">Lead</div>
<svg class="ic" style="left:2220.2px;top:1375.0px;width:70.0px;height:70.0px"><use href="#a-ein"/></svg>
<div class="bd" style="left:2264.3px;top:1418.7px;width:27px;height:27px"></div>
<svg class="ic" style="left:2266.3px;top:1420.7px;width:23.0px;height:23.0px"><use href="#i-tw"/></svg>
<div class="t" style="left:2302.5px;top:1378.0px;font-size:28px;color:#111;-webkit-text-stroke:0.3px #111;transform:scaleX(0.9881);">@Manish Patel  retweeted your tweet</div>
<div class="t" style="left:2300.9px;top:1422.0px;font-size:24.5px;color:#8a8a8a;-webkit-text-stroke:0.3px #8a8a8a;transform:scaleX(1.0266);">11 Mar 2021 12:30 PM</div>
<div class="tag" style="left:2564.500px;top:1418.5px;width:58px"></div>
<div class="t" style="left:2575.1px;top:1424.5px;font-size:18.5px;color:#ee7a28;-webkit-text-stroke:0.45px #ee7a28;transform:scaleX(0.8846);">Lead</div>
<svg class="ic" style="left:2221.4px;top:1496.2px;width:67.5px;height:67.5px"><use href="#a-cha"/></svg>
<div class="bd" style="left:2264.3px;top:1538.7px;width:27px;height:27px"></div>
<svg class="ic" style="left:2266.3px;top:1540.7px;width:23.0px;height:23.0px"><use href="#i-tw"/></svg>
<div class="t" style="left:2302.5px;top:1497.5px;font-size:28px;color:#111;-webkit-text-stroke:0.3px #111;transform:scaleX(0.9923);">@Charles retweeted your tweet</div>
</div></div>
<svg class="ic" style="left:2660px;top:60px;width:200px;height:120px" viewBox="0 0 2320 1392"><path fill="#e82100" d="M232 240 Q280 195 315 180 Q350 165 390 172 Q430 180 495 212 Q560 245 630 270 Q700 295 775 315 Q850 335 925 355 Q1000 375 1018 378 L1030 480 Q960 495 905 498 Q850 500 785 490 Q720 480 600 455 Q700 530 775 585 Q850 640 925 685 Q1000 730 1100 775 Q1200 820 1300 855 Q1400 890 1500 915 Q1600 940 1700 950 Q1800 960 1850 955 Q1900 950 1958 930 L1955 965 Q1850 990 1750 998 L1700 1028 Q1600 1010 1500 992 Q1400 975 1300 942 Q1200 910 1100 870 Q1000 830 925 795 Q850 760 775 710 Q700 660 650 620 Q600 580 565 550 Q530 520 480 490 Q510 640 535 745 Q560 850 582 935 Q605 1020 625 1210 L612 1212 Q590 1080 565 990 Q540 900 505 800 Q470 700 435 610 Q400 520 365 450 Q330 380 300 340 Q270 300 232 240Z"/></svg>
<div class="abs" style="left:0;top:1548px;width:2880px;height:8px;background:linear-gradient(rgba(40,45,60,0),rgba(40,45,60,.09))"></div>
</div></div></body></html>
